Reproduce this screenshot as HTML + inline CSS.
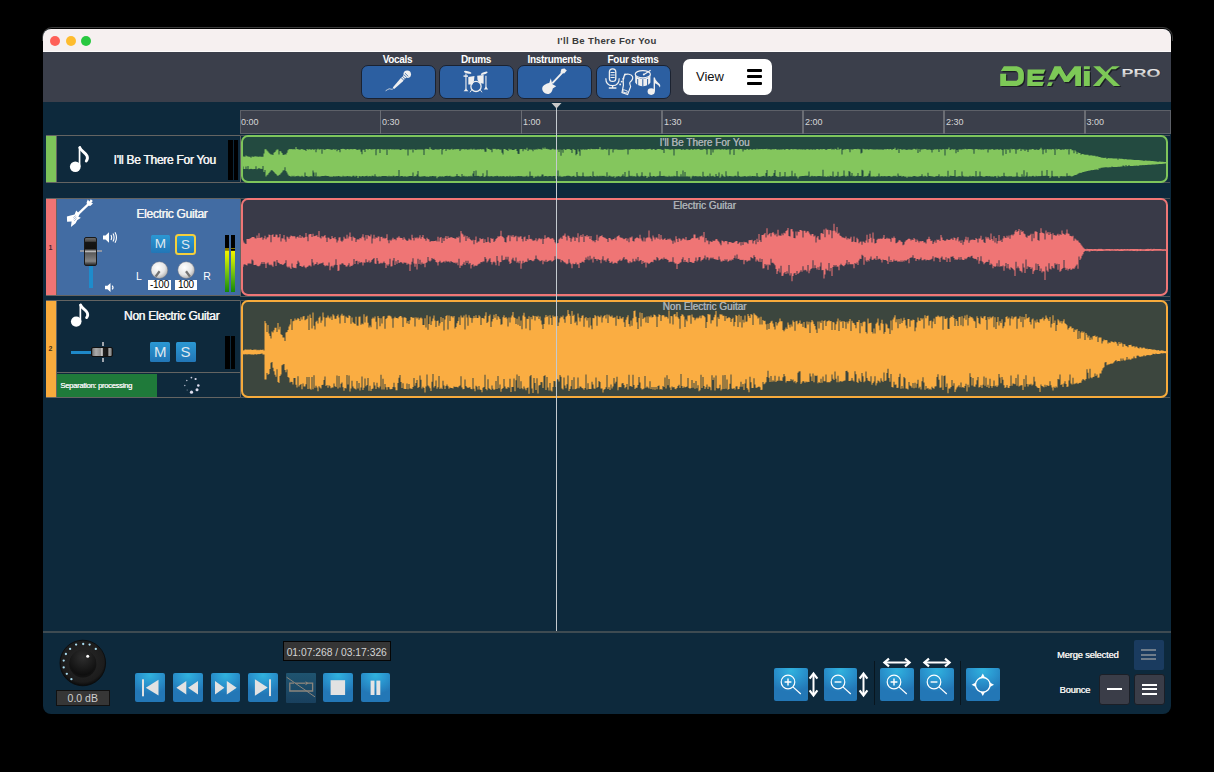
<!DOCTYPE html>
<html><head><meta charset="utf-8"><title>DeMIX Pro</title>
<style>
*{margin:0;padding:0;box-sizing:border-box}
html,body{width:1214px;height:772px;overflow:hidden;background:#000}
body{position:relative;font-family:"Liberation Sans",sans-serif}
.a{position:absolute}
#frame{position:absolute;left:41.6px;top:27.4px;width:1131.2px;height:14px;border-radius:10px 10px 0 0;border:1px solid #3a3a3a;border-bottom:none}
#win{position:absolute;left:43.4px;top:29px;width:1127.6px;height:685px;border-radius:8px;background:#0d293c}
#titlebar{position:absolute;left:43.4px;top:29px;width:1127.6px;height:22px;background:#f6f0f0;border-radius:8px 8px 0 0}
#tbline{position:absolute;left:43.4px;top:51px;width:1127.6px;height:1px;background:#fdfbfb}
.tl{position:absolute;top:35.6px;width:10px;height:10px;border-radius:50%}
#title{position:absolute;left:43px;width:1128px;top:35.2px;text-align:center;font-size:9.6px;font-weight:bold;color:#3a3a3a;letter-spacing:0.35px}
#toolbar{position:absolute;left:43.4px;top:52px;width:1127.6px;height:50px;background:#3b3f4b}
.stl{position:absolute;top:53.5px;width:75px;text-align:center;font-size:10px;font-weight:bold;color:#fff;letter-spacing:-0.3px;white-space:nowrap}
.stb{position:absolute;top:65px;width:75px;height:34px;background:#2c5fa1;border:1.5px solid #1b2230;border-radius:7px}
.stb svg{position:absolute;left:0;top:0}
#view{position:absolute;left:683px;top:59px;width:89px;height:35.5px;background:#fff;border-radius:7px}
#view span{position:absolute;left:13px;top:10px;font-size:13px;color:#111}
.hb{position:absolute;left:64px;width:15px;height:3.3px;background:#000;border-radius:1px}
#ruler{position:absolute;left:239.5px;top:110px;width:931.5px;height:24px;background:#3b3f4b;border:1px solid #5d6068}
.tick{position:absolute;top:110px;width:1.5px;height:23.5px;background:#6a6d74}
.tlab{position:absolute;top:116.6px;font-size:9px;color:#d6d6d6}
.hdr{position:absolute;left:45.5px;width:195px;border:1px solid #646462;border-left:none;background:#0e293c}
.strip{position:absolute;left:0;top:0;width:11.2px;height:100%;border-right:1px solid #646462}
.clip{position:absolute;border-radius:7px}
.ctitle{position:absolute;left:0;width:100%;text-align:center;font-size:10px;font-weight:normal;color:#aab0b5;white-space:nowrap;text-shadow:0.35px 0 0 #aab0b5}
.tname{position:absolute;font-size:12px;font-weight:normal;color:#f2f2f2;white-space:nowrap;letter-spacing:-0.28px;text-shadow:0.45px 0 0 #f2f2f2}
.mbtn{position:absolute;border-radius:1.5px;background:linear-gradient(#2b98d3,#2276b6);color:#dfe8f0;text-align:center}
.meter{position:absolute;width:4.5px;background:#000}
.tbtn{position:absolute;top:673px;width:29.6px;height:29.2px;border-radius:2px;background:radial-gradient(ellipse 75% 65% at 50% 8%,#30b2dd 0%,#2a97d0 45%,#2377b6 100%)}
.tbtn svg,.zbtn svg{position:absolute;left:0;top:0}
.zbtn{position:absolute;top:668px;width:33.5px;height:33px;border-radius:2px;background:radial-gradient(ellipse 75% 65% at 50% 8%,#30b2dd 0%,#2a97d0 45%,#2377b6 100%)}
.rl{position:absolute;left:240px;width:930px;height:1px;background:#4e5356}

</style></head>
<body>
<div id="frame"></div>
<div id="win"></div>
<div id="titlebar"></div>
<div id="tbline"></div>
<div class="tl" style="left:49.7px;background:#fe5f57"></div>
<div class="tl" style="left:65.6px;background:#febc2e"></div>
<div class="tl" style="left:81px;background:#28c840"></div>
<div id="title">I'll Be There For You</div>
<div id="toolbar"></div>

<div class="stl" style="left:360px">Vocals</div>
<div class="stl" style="left:438.5px">Drums</div>
<div class="stl" style="left:517px">Instruments</div>
<div class="stl" style="left:595.5px">Four stems</div>
<div class="stb" style="left:360.5px"></div>
<div class="stb" style="left:438.5px"></div>
<div class="stb" style="left:517px"></div>
<div class="stb" style="left:595.5px"></div>

<svg class="a" style="left:0;top:0" width="700" height="100" viewBox="0 0 700 100">
 <g fill="#f0f0f0" stroke="none">
  <!-- mic -->
  <circle cx="407.2" cy="74.2" r="3.8"/>
  <path d="M400.4,78.6 L403,81.2 L394.2,89 L392.8,87.6Z"/>
  <path d="M405.2,76.2 L401.2,80.2" stroke="#f0f0f0" stroke-width="3.4"/>
  <path d="M401.1,77.6 L403.9,80.4 M402.6,76.3 L405.4,79.1" stroke="#2c5fa1" stroke-width="0.85"/>
  <path d="M403.6,74.4 L406.9,77.7 M404.9,73.1 L408.3,76.4" stroke="#2c5fa1" stroke-width="0.8"/>
  <path d="M393.5,88.5 C391.5,90.2 390.5,88.6 389.2,88.8 C387.8,89 387.2,90.2 385.6,90.8" stroke="#e8e8e8" stroke-width="0.8" fill="none"/>
  <!-- drums -->
  <ellipse cx="467.7" cy="72.3" rx="3.8" ry="1.2" transform="rotate(14 467.7 72.3)"/>
  <ellipse cx="484.2" cy="73.2" rx="3.6" ry="1.1" transform="rotate(-20 484.2 73.2)"/>
  <rect x="465.4" y="73.5" width="1.1" height="16"/>
  <rect x="485.4" y="75.8" width="1.1" height="13"/>
  <path d="M463.5,75.4 L468,75.4 L468,76.8 L463.5,76.8Z"/>
  <path d="M463.6,91.3 L466,88.5 L468.4,91.3Z M483.8,89.5 L486,86.5 L488.2,89.5Z"/>
  <path d="M468.3,77 L474.5,76 L474,80.5 L472.6,84.5 L468.3,84.5Z"/>
  <path d="M477.2,75.8 L483.6,75 L483.6,83.8 L479.5,83 L477.5,80Z"/>
  <circle cx="476" cy="86.4" r="5.1" fill="none" stroke="#f0f0f0" stroke-width="1.3"/>
  <path d="M470,92.3 L472.2,89.2 M482,92.3 L479.8,89.2" stroke="#f0f0f0" stroke-width="0.9"/>
  <!-- guitar -->
  <path d="M560.4,72.6 L561.5,69 L564.5,68.5 L566.8,70.6 L564.2,73.6Z"/>
  <path d="M562.8,72.2 L552.2,83.4" stroke="#f0f0f0" stroke-width="1.9"/>
  <path d="M550.8,78.3 L549.4,82.8 C546.2,83.8 542.4,85.2 542.2,88.6 C542.1,91.8 545.4,94.6 548.6,94 C551.2,93.5 552.4,91.2 552.8,88.6 L556.2,86.2 L553.4,84.8 L552.2,84Z"/>
  <!-- four stems -->
  <rect x="609.4" y="68.8" width="6.4" height="12.6" rx="3.2" fill="none" stroke="#f0f0f0" stroke-width="1.3"/>
  <path d="M610.5,72.5 H614.7 M610.5,75 H614.7 M610.5,77.5 H614.7" stroke="#f0f0f0" stroke-width="1"/>
  <path d="M605.8,78.2 C605.8,83 608.6,85.6 612.6,85.6 C616.6,85.6 619.2,83 619.2,78.2" fill="none" stroke="#f0f0f0" stroke-width="1.2"/>
  <path d="M612.6,85.6 V87.8 M608.8,88 H616.4" stroke="#f0f0f0" stroke-width="1.3"/>
  <path d="M624.6,74.8 C626.6,73.4 631.6,74 632.6,76.8 C633.2,78.8 631.4,81 629.9,82.4 C629.3,83.6 630.4,85.2 630.6,86.6 L627.6,94.6 L622,92.6 L623.4,85.2 C622.9,82 623.4,77.4 624.6,74.8Z" fill="none" stroke="#f0f0f0" stroke-width="1.2"/>
  <path d="M623.4,89.6 L627.4,91 L626.6,93.2 L622.8,91.8Z" fill="none" stroke="#f0f0f0" stroke-width="0.9"/>
  <circle cx="625" cy="74.5" r="0.95"/><circle cx="623.3" cy="78.8" r="0.95"/><circle cx="621.7" cy="81.6" r="0.95"/><circle cx="620.2" cy="84.4" r="0.95"/>
  <ellipse cx="642.8" cy="74.2" rx="7.6" ry="3.6" fill="none" stroke="#f0f0f0" stroke-width="1.2"/>
  <path d="M635.2,74.5 L635.2,82.6 C636.5,85.3 640,86.2 642.8,86.2 C645.6,86.2 649.1,85.3 650.4,82.6 L650.4,74.5 C649,77.5 646,78.6 642.8,78.6 C639.6,78.6 636.6,77.5 635.2,74.5Z"/>
  <path d="M637.7,79 V85.5 M642.8,79.2 V86.5 M647.6,79 V85.5" stroke="#2c5fa1" stroke-width="1"/>
  <path d="M644,74.5 L650.6,70.3" stroke="#f0f0f0" stroke-width="1.2"/>
  <circle cx="643.8" cy="74.6" r="1"/>
  <ellipse cx="651.2" cy="91.6" rx="3.6" ry="3.3"/>
  <path d="M653.6,91.6 V77.4 L654.9,77.4 C655.3,80.5 657.6,81.8 659.4,83.8 C660.6,85.2 660.4,86.6 659.8,87.6 C659.4,86 658,84.5 655,83.2 L655,91.6Z"/>
 </g>
</svg>
<div id="view"><span>View</span>
<div class="hb" style="top:10px"></div><div class="hb" style="top:16.2px"></div><div class="hb" style="top:22.5px"></div></div>

<!-- logo -->
<svg class="a" style="left:995px;top:60px" width="172" height="34" viewBox="0 0 172 34">
 <defs>
  <linearGradient id="pro" x1="0" y1="0" x2="0" y2="1"><stop offset="0" stop-color="#fafafa"/><stop offset="0.5" stop-color="#d8d8d8"/><stop offset="1" stop-color="#9a9a9a"/></linearGradient>
  <g id="demix">
   <path d="M8.9,6.3 L20.5,6.3 C25.5,6.3 28.9,9.5 28.9,14 L28.9,18.5 C28.9,23 25.5,25.9 20.5,25.9 L5.2,25.9 L5.2,13.7 L11.1,13.7 L11.1,20.8 L20,20.8 C22,20.8 23.2,19.8 23.2,18 L23.2,14.3 C23.2,12.5 22,11.1 20,11.1 L5.9,11.1 Z"/>
   <path d="M32.6,9.6 L50.4,9.6 L48.6,13.7 L37.6,13.7 L37.6,15.9 L49,15.9 L47.4,20 L37.6,20 L37.6,21.9 L49,21.9 L47.4,25.9 L32.2,25.9 Z"/>
   <path d="M53.6,22.2 L57.8,22.2 L56.2,25.9 L51.9,25.9Z"/>
   <path d="M53.4,19.8 L59.5,6.3 L65.6,6.3 L71.5,16.5 L79.6,6.3 L86,6.3 L86,25.9 L80.2,25.9 L80.2,14.2 L73.8,22 L69.2,22 L63.8,13.2 L59.3,19.8 Z"/>
   <path d="M88.9,6.3 L94.8,6.3 L94.8,9.3 L88.9,9.3Z M88.9,11.1 L94.8,11.1 L94.8,25.9 L88.9,25.9Z"/>
   <path d="M98.2,6.3 L104.9,6.3 L125.2,25.9 L118.5,25.9 Z"/>
   <path d="M124.8,6.3 L120.6,9.3 L116.3,9.3 L104.5,25.9 L97.8,25.9 L112.8,9.9 L117.2,6.3Z"/>
  </g>
 </defs>
 <use href="#demix" transform="translate(1.2,1.2)" fill="#16191e" opacity="0.85"/>
 <use href="#demix" fill="#7dc957"/>
 <text x="126.5" y="16.6" fill="#1a1d22" opacity="0.6" font-family="Liberation Sans" font-weight="bold" font-size="11.5" textLength="39" lengthAdjust="spacingAndGlyphs" transform="translate(0.8,0.8)">PRO</text>
 <text x="126.5" y="16.6" fill="url(#pro)" font-family="Liberation Sans" font-weight="bold" font-size="11.5" textLength="39" lengthAdjust="spacingAndGlyphs">PRO</text>
</svg>

<!-- ruler -->
<div id="ruler"></div>
<div class="tick" style="left:379.5px"></div>
<div class="tick" style="left:520.5px"></div>
<div class="tick" style="left:661.3px"></div>
<div class="tick" style="left:802px"></div>
<div class="tick" style="left:943px"></div>
<div class="tick" style="left:1084px"></div>
<div class="tlab" style="left:241px">0:00</div>
<div class="tlab" style="left:382px">0:30</div>
<div class="tlab" style="left:523px">1:00</div>
<div class="tlab" style="left:664px">1:30</div>
<div class="tlab" style="left:805px">2:00</div>
<div class="tlab" style="left:946px">2:30</div>
<div class="tlab" style="left:1086.5px">3:00</div>

<!-- track headers -->
<div class="hdr" style="top:135px;height:48px"><div class="strip" style="background:#7dc45a"></div></div>
<div class="hdr" style="top:198px;height:98px;background:#426ca3"><div class="strip" style="background:#ef7474"></div></div>
<div class="hdr" style="top:300px;height:97.5px"><div class="strip" style="background:#f8ab3d"></div></div>

<!-- row lines -->
<div class="rl" style="top:135px"></div><div class="rl" style="top:182.3px"></div>
<div class="rl" style="top:198px"></div><div class="rl" style="top:295.6px"></div>
<div class="rl" style="top:299.8px"></div><div class="rl" style="top:396.8px"></div>
<!-- clips -->
<div class="clip" style="left:241px;top:135px;width:927px;height:48px;background:#234a40;border:2px solid #7ec55b"></div>
<div class="clip" style="left:240.8px;top:198px;width:926.8px;height:98.4px;background:#393a48;border:2px solid #ef7676"></div>
<div class="clip" style="left:240.8px;top:299.5px;width:927.2px;height:98px;background:#3c463e;border:2px solid #f7ab3c"></div>

<svg class="a" style="left:0;top:0" width="1214" height="772">
 <path d="M242.5,156.6H243.5V156.5H244.5V156.7H245.5V155.6H246.5V156.3H247.5V156.5H248.5V156.7H249.5V156.7H250.5V157.7H251.5V156.4H252.5V156.7H253.5V156.7H254.5V156.3H255.5V156.6H256.5V156.5H257.5V156.7H258.5V156.7H259.5V156.4H260.5V156.8H261.5V156.7H262.5V156.7H263.5V153.5H264.5V149.3H265.5V149.2H266.5V150.5H267.5V151.6H268.5V152.7H269.5V153.8H270.5V154.4H271.5V154.4H272.5V155.1H273.5V152.7H274.5V152.0H275.5V150.4H276.5V149.5H277.5V149.5H278.5V154.4H279.5V151.0H280.5V151.5H281.5V152.9H282.5V154.7H283.5V155.0H284.5V154.3H285.5V154.4H286.5V152.7H287.5V150.2H288.5V149.3H289.5V149.0H290.5V149.2H291.5V149.1H292.5V149.4H293.5V149.1H294.5V149.4H295.5V147.0H296.5V148.9H297.5V149.3H298.5V149.6H299.5V149.8H300.5V149.2H301.5V149.1H302.5V149.4H303.5V149.8H304.5V149.9H305.5V151.0H306.5V149.0H307.5V149.6H308.5V149.5H309.5V148.9H310.5V149.9H311.5V149.2H312.5V149.3H313.5V149.9H314.5V148.9H315.5V152.3H316.5V149.5H317.5V148.8H318.5V149.5H319.5V149.4H320.5V149.1H321.5V153.8H322.5V148.9H323.5V149.7H324.5V149.8H325.5V149.2H326.5V149.0H327.5V149.0H328.5V149.3H329.5V149.3H330.5V149.7H331.5V149.7H332.5V149.6H333.5V149.0H334.5V149.9H335.5V149.1H336.5V151.3H337.5V149.8H338.5V149.9H339.5V152.2H340.5V148.9H341.5V149.1H342.5V148.8H343.5V149.1H344.5V149.2H345.5V149.7H346.5V148.9H347.5V148.9H348.5V149.5H349.5V149.2H350.5V149.0H351.5V149.2H352.5V149.2H353.5V149.0H354.5V149.1H355.5V149.2H356.5V149.9H357.5V149.7H358.5V149.5H359.5V149.4H360.5V151.8H361.5V154.3H362.5V149.7H363.5V149.8H364.5V151.9H365.5V148.9H366.5V149.0H367.5V149.7H368.5V148.9H369.5V149.1H370.5V149.6H371.5V149.5H372.5V149.3H373.5V149.3H374.5V149.0H375.5V155.2H376.5V149.4H377.5V148.9H378.5V149.3H379.5V152.9H380.5V148.9H381.5V149.2H382.5V149.5H383.5V149.5H384.5V149.4H385.5V149.3H386.5V155.1H387.5V149.1H388.5V149.8H389.5V149.2H390.5V148.9H391.5V149.7H392.5V149.1H393.5V149.7H394.5V149.2H395.5V149.4H396.5V149.3H397.5V149.6H398.5V149.3H399.5V149.9H400.5V149.9H401.5V149.3H402.5V149.3H403.5V149.0H404.5V149.8H405.5V149.5H406.5V149.6H407.5V155.6H408.5V149.4H409.5V149.5H410.5V149.7H411.5V149.3H412.5V152.6H413.5V149.1H414.5V149.9H415.5V149.8H416.5V149.7H417.5V149.2H418.5V149.8H419.5V149.3H420.5V149.8H421.5V149.2H422.5V149.7H423.5V155.1H424.5V149.3H425.5V148.8H426.5V149.1H427.5V149.0H428.5V149.4H429.5V147.2H430.5V148.9H431.5V149.6H432.5V149.9H433.5V149.8H434.5V149.6H435.5V149.0H436.5V149.7H437.5V149.3H438.5V149.7H439.5V149.1H440.5V149.0H441.5V154.6H442.5V149.8H443.5V149.0H444.5V149.0H445.5V151.1H446.5V149.3H447.5V149.3H448.5V149.4H449.5V149.7H450.5V149.2H451.5V148.8H452.5V149.9H453.5V149.1H454.5V149.6H455.5V149.1H456.5V149.3H457.5V148.9H458.5V149.3H459.5V151.0H460.5V149.5H461.5V149.3H462.5V148.9H463.5V149.3H464.5V149.4H465.5V148.9H466.5V149.6H467.5V149.8H468.5V149.3H469.5V149.6H470.5V148.8H471.5V149.5H472.5V149.6H473.5V148.8H474.5V149.7H475.5V149.5H476.5V149.7H477.5V149.1H478.5V149.7H479.5V149.0H480.5V149.2H481.5V149.4H482.5V149.1H483.5V149.5H484.5V151.8H485.5V151.8H486.5V147.8H487.5V149.1H488.5V149.0H489.5V149.8H490.5V149.7H491.5V152.2H492.5V148.8H493.5V149.1H494.5V148.8H495.5V149.2H496.5V149.5H497.5V149.0H498.5V149.2H499.5V149.8H500.5V149.5H501.5V152.8H502.5V154.5H503.5V149.1H504.5V149.0H505.5V149.7H506.5V149.9H507.5V151.1H508.5V148.8H509.5V149.8H510.5V149.0H511.5V149.9H512.5V149.9H513.5V149.9H514.5V149.2H515.5V149.0H516.5V151.0H517.5V153.8H518.5V154.1H519.5V149.3H520.5V149.0H521.5V149.0H522.5V151.3H523.5V149.2H524.5V149.2H525.5V149.8H526.5V147.7H527.5V151.0H528.5V149.6H529.5V149.6H530.5V149.6H531.5V149.7H532.5V151.3H533.5V149.2H534.5V149.9H535.5V148.9H536.5V149.7H537.5V148.8H538.5V149.3H539.5V149.0H540.5V149.5H541.5V149.5H542.5V147.8H543.5V149.0H544.5V147.6H545.5V149.1H546.5V148.8H547.5V149.3H548.5V149.2H549.5V149.8H550.5V149.8H551.5V149.2H552.5V148.8H553.5V149.4H554.5V149.4H555.5V149.6H556.5V149.7H557.5V149.5H558.5V152.1H559.5V149.6H560.5V155.8H561.5V149.8H562.5V152.8H563.5V149.1H564.5V149.7H565.5V149.9H566.5V149.0H567.5V149.2H568.5V148.9H569.5V149.4H570.5V149.9H571.5V153.0H572.5V149.0H573.5V149.6H574.5V149.9H575.5V155.3H576.5V154.0H577.5V149.2H578.5V151.5H579.5V155.7H580.5V149.3H581.5V149.9H582.5V149.1H583.5V149.7H584.5V149.4H585.5V149.4H586.5V149.8H587.5V148.9H588.5V149.0H589.5V149.4H590.5V148.8H591.5V149.0H592.5V149.3H593.5V149.1H594.5V149.3H595.5V149.0H596.5V149.1H597.5V149.3H598.5V149.0H599.5V146.9H600.5V149.6H601.5V149.5H602.5V149.7H603.5V149.2H604.5V148.9H605.5V149.5H606.5V149.7H607.5V148.8H608.5V155.2H609.5V149.3H610.5V149.3H611.5V148.9H612.5V152.5H613.5V149.6H614.5V149.5H615.5V149.3H616.5V149.4H617.5V149.8H618.5V149.7H619.5V149.7H620.5V149.7H621.5V149.7H622.5V149.8H623.5V149.6H624.5V149.5H625.5V149.0H626.5V149.5H627.5V154.5H628.5V149.6H629.5V149.8H630.5V149.0H631.5V149.0H632.5V149.2H633.5V148.9H634.5V149.3H635.5V149.4H636.5V149.0H637.5V149.6H638.5V149.1H639.5V149.1H640.5V149.5H641.5V148.9H642.5V149.1H643.5V149.2H644.5V149.8H645.5V149.3H646.5V149.2H647.5V149.0H648.5V148.9H649.5V148.8H650.5V149.2H651.5V149.9H652.5V149.1H653.5V148.9H654.5V149.8H655.5V149.9H656.5V149.2H657.5V148.9H658.5V149.0H659.5V149.3H660.5V149.3H661.5V149.9H662.5V149.7H663.5V153.1H664.5V148.8H665.5V148.9H666.5V149.2H667.5V149.1H668.5V149.6H669.5V149.6H670.5V149.7H671.5V148.9H672.5V149.4H673.5V155.4H674.5V149.2H675.5V148.9H676.5V149.4H677.5V149.0H678.5V149.2H679.5V148.9H680.5V149.6H681.5V149.9H682.5V149.1H683.5V149.8H684.5V149.8H685.5V149.6H686.5V148.9H687.5V149.6H688.5V149.6H689.5V149.9H690.5V149.0H691.5V149.2H692.5V149.9H693.5V149.1H694.5V149.2H695.5V149.5H696.5V149.3H697.5V148.9H698.5V149.0H699.5V149.7H700.5V149.7H701.5V149.7H702.5V149.6H703.5V148.9H704.5V149.1H705.5V149.8H706.5V154.6H707.5V149.3H708.5V148.9H709.5V149.5H710.5V155.1H711.5V149.5H712.5V152.6H713.5V149.6H714.5V149.4H715.5V149.3H716.5V149.4H717.5V149.2H718.5V149.2H719.5V149.6H720.5V149.8H721.5V149.1H722.5V149.5H723.5V149.4H724.5V149.0H725.5V149.9H726.5V149.6H727.5V149.4H728.5V149.2H729.5V154.6H730.5V149.7H731.5V149.6H732.5V149.0H733.5V154.9H734.5V149.1H735.5V148.9H736.5V148.9H737.5V149.3H738.5V149.6H739.5V149.0H740.5V148.9H741.5V149.3H742.5V151.6H743.5V149.5H744.5V149.8H745.5V149.8H746.5V149.1H747.5V149.3H748.5V149.9H749.5V149.0H750.5V149.2H751.5V149.8H752.5V149.6H753.5V149.0H754.5V149.6H755.5V149.6H756.5V148.8H757.5V149.4H758.5V149.1H759.5V149.2H760.5V149.1H761.5V149.1H762.5V149.3H763.5V148.9H764.5V148.9H765.5V149.0H766.5V148.8H767.5V149.6H768.5V148.9H769.5V149.5H770.5V149.6H771.5V149.6H772.5V149.0H773.5V149.4H774.5V149.1H775.5V148.9H776.5V149.7H777.5V149.5H778.5V149.4H779.5V149.8H780.5V149.3H781.5V149.8H782.5V149.1H783.5V149.4H784.5V149.7H785.5V148.9H786.5V149.0H787.5V148.9H788.5V149.7H789.5V149.5H790.5V148.9H791.5V148.9H792.5V149.5H793.5V149.0H794.5V149.2H795.5V149.0H796.5V149.6H797.5V149.5H798.5V149.2H799.5V149.2H800.5V149.4H801.5V149.3H802.5V149.7H803.5V149.0H804.5V149.9H805.5V149.2H806.5V149.3H807.5V148.9H808.5V149.7H809.5V149.4H810.5V149.3H811.5V149.4H812.5V149.7H813.5V149.1H814.5V149.9H815.5V149.3H816.5V149.1H817.5V148.9H818.5V149.8H819.5V149.2H820.5V149.0H821.5V149.5H822.5V149.1H823.5V149.1H824.5V149.2H825.5V149.9H826.5V149.5H827.5V149.0H828.5V149.1H829.5V149.0H830.5V148.8H831.5V149.8H832.5V149.0H833.5V149.7H834.5V148.8H835.5V149.1H836.5V149.9H837.5V147.4H838.5V149.7H839.5V149.0H840.5V148.8H841.5V154.6H842.5V149.9H843.5V149.3H844.5V149.5H845.5V149.2H846.5V149.1H847.5V148.9H848.5V149.4H849.5V152.2H850.5V149.2H851.5V149.4H852.5V149.5H853.5V149.1H854.5V148.9H855.5V149.0H856.5V149.2H857.5V148.8H858.5V149.3H859.5V149.3H860.5V153.6H861.5V152.7H862.5V148.8H863.5V149.3H864.5V149.3H865.5V149.4H866.5V149.0H867.5V149.4H868.5V149.8H869.5V149.0H870.5V149.3H871.5V149.2H872.5V149.5H873.5V149.5H874.5V149.5H875.5V149.4H876.5V149.3H877.5V149.5H878.5V149.5H879.5V149.6H880.5V149.5H881.5V149.5H882.5V149.7H883.5V149.4H884.5V148.9H885.5V149.6H886.5V148.9H887.5V149.1H888.5V149.4H889.5V149.1H890.5V149.1H891.5V149.9H892.5V148.9H893.5V149.1H894.5V147.7H895.5V149.8H896.5V149.9H897.5V148.8H898.5V152.9H899.5V149.0H900.5V149.3H901.5V149.8H902.5V149.4H903.5V149.2H904.5V149.5H905.5V149.8H906.5V149.9H907.5V149.6H908.5V149.6H909.5V149.4H910.5V149.8H911.5V149.7H912.5V149.3H913.5V148.8H914.5V148.9H915.5V149.7H916.5V148.8H917.5V152.9H918.5V149.1H919.5V151.8H920.5V149.4H921.5V149.5H922.5V149.2H923.5V149.3H924.5V149.1H925.5V149.3H926.5V149.8H927.5V149.8H928.5V149.4H929.5V149.5H930.5V149.9H931.5V152.4H932.5V149.7H933.5V149.7H934.5V149.1H935.5V149.8H936.5V148.9H937.5V149.5H938.5V152.1H939.5V149.0H940.5V149.8H941.5V149.6H942.5V149.0H943.5V149.2H944.5V155.4H945.5V148.9H946.5V149.4H947.5V149.1H948.5V147.4H949.5V149.9H950.5V149.8H951.5V149.0H952.5V149.5H953.5V149.6H954.5V149.3H955.5V153.3H956.5V149.9H957.5V151.9H958.5V149.6H959.5V149.6H960.5V149.5H961.5V149.7H962.5V149.0H963.5V149.5H964.5V148.8H965.5V148.9H966.5V149.4H967.5V148.9H968.5V148.9H969.5V149.0H970.5V149.1H971.5V149.2H972.5V149.5H973.5V153.8H974.5V149.3H975.5V149.1H976.5V149.0H977.5V149.4H978.5V149.4H979.5V149.2H980.5V149.8H981.5V149.4H982.5V149.6H983.5V149.7H984.5V148.9H985.5V149.5H986.5V149.1H987.5V152.4H988.5V149.5H989.5V149.6H990.5V149.4H991.5V148.9H992.5V149.3H993.5V149.9H994.5V149.4H995.5V149.6H996.5V149.3H997.5V149.3H998.5V149.9H999.5V149.3H1000.5V149.3H1001.5V149.9H1002.5V155.4H1003.5V149.5H1004.5V149.2H1005.5V153.9H1006.5V149.1H1007.5V149.9H1008.5V149.2H1009.5V152.7H1010.5V148.8H1011.5V149.5H1012.5V149.0H1013.5V149.0H1014.5V149.4H1015.5V153.7H1016.5V149.4H1017.5V149.8H1018.5V149.1H1019.5V148.8H1020.5V151.0H1021.5V149.3H1022.5V149.5H1023.5V149.4H1024.5V150.9H1025.5V149.4H1026.5V149.7H1027.5V151.9H1028.5V149.7H1029.5V149.3H1030.5V149.7H1031.5V149.1H1032.5V148.9H1033.5V149.5H1034.5V149.9H1035.5V149.6H1036.5V149.6H1037.5V149.9H1038.5V149.7H1039.5V149.1H1040.5V147.8H1041.5V149.5H1042.5V154.2H1043.5V149.7H1044.5V149.2H1045.5V152.7H1046.5V149.2H1047.5V148.9H1048.5V149.8H1049.5V149.0H1050.5V149.7H1051.5V149.3H1052.5V149.0H1053.5V149.5H1054.5V155.1H1055.5V148.8H1056.5V149.7H1057.5V149.1H1058.5V149.1H1059.5V149.6H1060.5V149.9H1061.5V149.4H1062.5V149.6H1063.5V149.7H1064.5V149.3H1065.5V148.9H1066.5V149.7H1067.5V149.0H1068.5V154.5H1069.5V149.3H1070.5V149.0H1071.5V150.2H1072.5V150.3H1073.5V153.3H1074.5V150.3H1075.5V151.4H1076.5V153.9H1077.5V152.3H1078.5V153.1H1079.5V153.0H1080.5V154.8H1081.5V154.0H1082.5V153.9H1083.5V154.5H1084.5V154.8H1085.5V154.8H1086.5V154.7H1087.5V154.8H1088.5V155.4H1089.5V155.5H1090.5V155.3H1091.5V155.4H1092.5V155.8H1093.5V155.7H1094.5V155.8H1095.5V156.4H1096.5V156.3H1097.5V156.6H1098.5V157.1H1099.5V157.1H1100.5V157.4H1101.5V157.7H1102.5V157.7H1103.5V158.0H1104.5V157.8H1105.5V157.8H1106.5V159.0H1107.5V158.0H1108.5V158.2H1109.5V158.3H1110.5V158.2H1111.5V158.3H1112.5V158.5H1113.5V158.4H1114.5V158.5H1115.5V158.6H1116.5V158.4H1117.5V159.7H1118.5V158.6H1119.5V158.7H1120.5V158.7H1121.5V158.8H1122.5V159.0H1123.5V159.2H1124.5V159.3H1125.5V159.1H1126.5V159.4H1127.5V159.5H1128.5V159.4H1129.5V159.5H1130.5V159.4H1131.5V159.8H1132.5V159.7H1133.5V159.9H1134.5V159.9H1135.5V160.0H1136.5V159.9H1137.5V160.0H1138.5V160.1H1139.5V160.2H1140.5V160.3H1141.5V160.4H1142.5V160.4H1143.5V161.0H1144.5V160.5H1145.5V160.5H1146.5V160.7H1147.5V160.7H1148.5V160.7H1149.5V160.8H1150.5V161.0H1151.5V161.0H1152.5V161.1H1153.5V161.2H1154.5V161.2H1155.5V161.4H1156.5V161.4H1157.5V161.9H1158.5V161.6H1159.5V161.6H1160.5V161.7H1161.5V161.7H1162.5V161.8H1163.5V161.9H1164.5V162.1H1165.5V161.9H1166.5V162.0H1167.5V163.6H1166.5V163.5H1165.5V163.5H1164.5V163.7H1163.5V163.7H1162.5V163.9H1161.5V164.0H1160.5V164.0H1159.5V164.1H1158.5V164.2H1157.5V164.2H1156.5V164.3H1155.5V164.4H1154.5V164.4H1153.5V164.6H1152.5V164.6H1151.5V164.7H1150.5V164.8H1149.5V164.8H1148.5V164.8H1147.5V165.0H1146.5V165.1H1145.5V165.0H1144.5V165.2H1143.5V165.1H1142.5V165.2H1141.5V165.3H1140.5V165.3H1139.5V165.4H1138.5V165.9H1137.5V165.6H1136.5V165.7H1135.5V165.7H1134.5V165.8H1133.5V166.0H1132.5V165.9H1131.5V165.9H1130.5V166.0H1129.5V164.9H1128.5V166.0H1127.5V166.3H1126.5V165.0H1125.5V166.4H1124.5V165.7H1123.5V165.6H1122.5V166.5H1121.5V166.5H1120.5V166.8H1119.5V166.8H1118.5V166.8H1117.5V166.9H1116.5V167.0H1115.5V167.1H1114.5V167.0H1113.5V166.9H1112.5V166.6H1111.5V167.3H1110.5V167.3H1109.5V167.3H1108.5V167.5H1107.5V167.3H1106.5V167.3H1105.5V167.3H1104.5V167.4H1103.5V167.4H1102.5V167.7H1101.5V167.8H1100.5V168.4H1099.5V168.3H1098.5V169.9H1097.5V169.2H1096.5V169.7H1095.5V169.5H1094.5V169.9H1093.5V170.1H1092.5V170.2H1091.5V170.1H1090.5V170.8H1089.5V170.6H1088.5V171.1H1087.5V170.9H1086.5V171.5H1085.5V171.4H1084.5V172.1H1083.5V171.9H1082.5V172.4H1081.5V173.0H1080.5V172.8H1079.5V173.2H1078.5V173.8H1077.5V174.5H1076.5V174.9H1075.5V175.1H1074.5V175.6H1073.5V176.1H1072.5V176.4H1071.5V176.3H1070.5V175.7H1069.5V175.7H1068.5V176.1H1067.5V173.3H1066.5V176.2H1065.5V176.5H1064.5V175.9H1063.5V176.4H1062.5V175.9H1061.5V176.2H1060.5V176.2H1059.5V177.9H1058.5V176.6H1057.5V176.1H1056.5V176.6H1055.5V176.0H1054.5V176.8H1053.5V175.9H1052.5V170.7H1051.5V176.4H1050.5V178.0H1049.5V176.0H1048.5V176.1H1047.5V169.9H1046.5V175.7H1045.5V175.8H1044.5V175.9H1043.5V175.8H1042.5V170.7H1041.5V176.0H1040.5V176.3H1039.5V176.1H1038.5V176.2H1037.5V176.2H1036.5V175.7H1035.5V176.7H1034.5V176.3H1033.5V175.8H1032.5V176.0H1031.5V176.7H1030.5V175.9H1029.5V176.6H1028.5V176.5H1027.5V172.2H1026.5V175.8H1025.5V176.8H1024.5V170.3H1023.5V176.4H1022.5V174.3H1021.5V176.7H1020.5V176.8H1019.5V176.7H1018.5V176.2H1017.5V172.6H1016.5V176.3H1015.5V176.7H1014.5V176.4H1013.5V176.8H1012.5V176.5H1011.5V176.0H1010.5V176.5H1009.5V176.1H1008.5V176.8H1007.5V176.2H1006.5V176.5H1005.5V176.0H1004.5V172.7H1003.5V176.2H1002.5V176.1H1001.5V176.6H1000.5V176.8H999.5V176.5H998.5V175.7H997.5V177.8H996.5V176.2H995.5V175.9H994.5V176.5H993.5V176.7H992.5V176.2H991.5V176.7H990.5V175.9H989.5V176.2H988.5V176.2H987.5V175.9H986.5V176.1H985.5V176.6H984.5V176.8H983.5V176.6H982.5V176.2H981.5V176.1H980.5V171.6H979.5V176.3H978.5V176.3H977.5V176.5H976.5V171.1H975.5V176.6H974.5V176.3H973.5V175.9H972.5V176.2H971.5V176.6H970.5V175.7H969.5V176.6H968.5V176.8H967.5V176.4H966.5V176.4H965.5V176.4H964.5V176.5H963.5V175.8H962.5V171.4H961.5V176.6H960.5V176.0H959.5V176.3H958.5V176.2H957.5V176.7H956.5V176.4H955.5V170.1H954.5V176.0H953.5V176.1H952.5V176.0H951.5V175.8H950.5V175.7H949.5V176.7H948.5V170.8H947.5V176.5H946.5V176.5H945.5V176.1H944.5V176.7H943.5V176.2H942.5V176.2H941.5V176.3H940.5V176.4H939.5V174.3H938.5V176.1H937.5V176.3H936.5V175.9H935.5V176.7H934.5V176.7H933.5V176.6H932.5V176.3H931.5V176.3H930.5V176.0H929.5V175.9H928.5V172.7H927.5V176.7H926.5V176.2H925.5V175.7H924.5V176.6H923.5V176.2H922.5V174.3H921.5V176.1H920.5V176.2H919.5V176.3H918.5V176.7H917.5V176.4H916.5V176.6H915.5V176.1H914.5V176.1H913.5V176.3H912.5V176.7H911.5V176.7H910.5V176.6H909.5V176.7H908.5V176.4H907.5V177.8H906.5V176.5H905.5V176.7H904.5V176.3H903.5V175.9H902.5V176.7H901.5V175.7H900.5V176.1H899.5V175.7H898.5V173.4H897.5V176.7H896.5V175.8H895.5V176.2H894.5V175.8H893.5V176.2H892.5V176.6H891.5V176.7H890.5V176.1H889.5V176.1H888.5V175.9H887.5V176.5H886.5V176.3H885.5V176.2H884.5V175.9H883.5V176.5H882.5V176.1H881.5V176.2H880.5V176.5H879.5V173.5H878.5V176.2H877.5V176.2H876.5V176.4H875.5V176.7H874.5V176.2H873.5V176.5H872.5V176.6H871.5V176.4H870.5V170.7H869.5V173.4H868.5V175.7H867.5V176.0H866.5V176.5H865.5V176.1H864.5V176.7H863.5V170.4H862.5V169.8H861.5V175.9H860.5V176.0H859.5V175.9H858.5V173.0H857.5V175.8H856.5V176.1H855.5V176.5H854.5V175.8H853.5V176.2H852.5V172.9H851.5V175.8H850.5V171.8H849.5V171.0H848.5V176.2H847.5V175.7H846.5V176.7H845.5V175.8H844.5V170.4H843.5V175.8H842.5V176.1H841.5V176.3H840.5V176.4H839.5V176.4H838.5V171.8H837.5V175.9H836.5V175.8H835.5V176.7H834.5V176.4H833.5V171.6H832.5V176.3H831.5V176.0H830.5V175.7H829.5V176.8H828.5V176.1H827.5V176.8H826.5V176.8H825.5V176.3H824.5V176.5H823.5V169.8H822.5V176.3H821.5V176.2H820.5V176.1H819.5V175.9H818.5V176.0H817.5V176.3H816.5V176.4H815.5V175.9H814.5V176.2H813.5V176.3H812.5V175.8H811.5V176.2H810.5V176.7H809.5V171.4H808.5V175.8H807.5V175.8H806.5V175.8H805.5V175.8H804.5V176.0H803.5V175.9H802.5V175.9H801.5V176.3H800.5V176.2H799.5V176.7H798.5V178.4H797.5V176.4H796.5V176.2H795.5V173.2H794.5V176.2H793.5V176.3H792.5V170.8H791.5V176.2H790.5V176.1H789.5V176.5H788.5V176.5H787.5V176.5H786.5V176.4H785.5V171.9H784.5V176.2H783.5V176.2H782.5V176.3H781.5V176.7H780.5V172.1H779.5V176.8H778.5V176.7H777.5V176.5H776.5V175.9H775.5V169.9H774.5V173.1H773.5V175.7H772.5V175.9H771.5V176.7H770.5V176.0H769.5V176.1H768.5V176.4H767.5V169.9H766.5V173.1H765.5V176.5H764.5V175.7H763.5V176.0H762.5V176.3H761.5V176.4H760.5V176.7H759.5V176.8H758.5V176.2H757.5V173.1H756.5V176.5H755.5V175.9H754.5V176.3H753.5V176.1H752.5V176.0H751.5V176.6H750.5V175.8H749.5V176.5H748.5V175.9H747.5V176.7H746.5V176.6H745.5V176.1H744.5V176.2H743.5V176.4H742.5V176.4H741.5V176.7H740.5V176.6H739.5V176.0H738.5V171.5H737.5V176.4H736.5V175.8H735.5V175.7H734.5V176.3H733.5V176.6H732.5V176.3H731.5V176.2H730.5V176.0H729.5V176.0H728.5V176.6H727.5V175.7H726.5V171.2H725.5V176.7H724.5V176.6H723.5V175.8H722.5V174.2H721.5V176.4H720.5V177.8H719.5V172.6H718.5V176.2H717.5V176.0H716.5V173.9H715.5V176.7H714.5V176.5H713.5V175.8H712.5V176.3H711.5V176.3H710.5V173.4H709.5V176.6H708.5V175.7H707.5V176.0H706.5V176.7H705.5V176.2H704.5V176.2H703.5V171.8H702.5V176.7H701.5V176.5H700.5V175.9H699.5V176.6H698.5V176.2H697.5V176.6H696.5V176.1H695.5V176.2H694.5V176.3H693.5V175.8H692.5V176.4H691.5V178.6H690.5V176.6H689.5V176.4H688.5V176.5H687.5V176.2H686.5V176.4H685.5V171.9H684.5V176.5H683.5V170.5H682.5V176.5H681.5V174.2H680.5V176.6H679.5V176.4H678.5V176.3H677.5V171.0H676.5V176.3H675.5V176.3H674.5V175.8H673.5V176.6H672.5V176.3H671.5V176.5H670.5V176.4H669.5V175.8H668.5V176.7H667.5V176.6H666.5V176.4H665.5V176.2H664.5V175.7H663.5V175.9H662.5V176.1H661.5V175.9H660.5V171.2H659.5V175.7H658.5V176.2H657.5V176.0H656.5V176.7H655.5V176.4H654.5V175.9H653.5V175.9H652.5V176.7H651.5V175.9H650.5V172.5H649.5V176.8H648.5V176.6H647.5V177.9H646.5V176.1H645.5V175.7H644.5V176.5H643.5V176.0H642.5V172.2H641.5V175.7H640.5V176.5H639.5V176.4H638.5V175.8H637.5V173.3H636.5V176.6H635.5V176.5H634.5V176.0H633.5V176.4H632.5V175.8H631.5V176.3H630.5V175.7H629.5V170.8H628.5V176.6H627.5V176.8H626.5V176.7H625.5V171.9H624.5V176.3H623.5V174.2H622.5V175.8H621.5V176.4H620.5V176.7H619.5V176.1H618.5V176.3H617.5V176.4H616.5V176.4H615.5V177.7H614.5V175.9H613.5V176.7H612.5V176.5H611.5V176.4H610.5V175.7H609.5V175.7H608.5V176.7H607.5V172.3H606.5V176.5H605.5V176.3H604.5V175.7H603.5V175.9H602.5V175.7H601.5V176.2H600.5V175.8H599.5V176.3H598.5V176.3H597.5V175.8H596.5V176.6H595.5V176.2H594.5V175.9H593.5V171.5H592.5V176.7H591.5V175.9H590.5V176.1H589.5V176.4H588.5V176.2H587.5V176.5H586.5V176.2H585.5V176.7H584.5V175.9H583.5V172.4H582.5V175.9H581.5V176.4H580.5V176.0H579.5V176.3H578.5V175.8H577.5V172.0H576.5V176.8H575.5V176.7H574.5V175.7H573.5V176.0H572.5V176.5H571.5V176.5H570.5V175.9H569.5V175.8H568.5V175.7H567.5V175.7H566.5V176.1H565.5V176.6H564.5V176.0H563.5V176.8H562.5V176.4H561.5V176.7H560.5V175.8H559.5V176.4H558.5V170.5H557.5V176.1H556.5V178.7H555.5V176.0H554.5V175.9H553.5V176.0H552.5V176.4H551.5V176.1H550.5V176.1H549.5V176.0H548.5V176.5H547.5V176.2H546.5V176.1H545.5V176.1H544.5V176.5H543.5V174.6H542.5V174.6H541.5V176.3H540.5V176.5H539.5V176.5H538.5V175.8H537.5V176.4H536.5V176.4H535.5V176.6H534.5V178.0H533.5V176.2H532.5V175.8H531.5V176.1H530.5V171.4H529.5V176.2H528.5V176.7H527.5V175.8H526.5V176.3H525.5V176.5H524.5V176.4H523.5V176.6H522.5V176.3H521.5V176.0H520.5V176.3H519.5V175.9H518.5V175.9H517.5V176.2H516.5V176.2H515.5V176.3H514.5V176.7H513.5V176.1H512.5V176.4H511.5V176.5H510.5V175.7H509.5V176.4H508.5V176.5H507.5V176.1H506.5V176.5H505.5V176.8H504.5V176.0H503.5V176.3H502.5V176.3H501.5V176.5H500.5V176.0H499.5V176.8H498.5V175.9H497.5V175.8H496.5V176.3H495.5V176.0H494.5V176.6H493.5V176.5H492.5V176.2H491.5V175.9H490.5V176.4H489.5V176.3H488.5V176.2H487.5V170.2H486.5V175.8H485.5V176.8H484.5V176.7H483.5V173.3H482.5V176.1H481.5V176.3H480.5V176.4H479.5V176.1H478.5V175.8H477.5V175.9H476.5V170.5H475.5V175.9H474.5V171.0H473.5V173.5H472.5V176.4H471.5V175.7H470.5V176.6H469.5V176.1H468.5V176.5H467.5V176.4H466.5V176.3H465.5V176.6H464.5V175.8H463.5V176.2H462.5V174.1H461.5V176.8H460.5V176.4H459.5V175.9H458.5V175.9H457.5V174.0H456.5V176.0H455.5V176.5H454.5V176.5H453.5V176.8H452.5V176.4H451.5V176.5H450.5V175.7H449.5V176.0H448.5V176.2H447.5V175.8H446.5V176.1H445.5V176.0H444.5V176.8H443.5V176.5H442.5V176.3H441.5V176.8H440.5V175.9H439.5V176.7H438.5V176.7H437.5V178.2H436.5V176.3H435.5V176.3H434.5V176.2H433.5V175.9H432.5V176.0H431.5V176.5H430.5V176.1H429.5V176.7H428.5V176.8H427.5V176.6H426.5V176.7H425.5V176.0H424.5V176.2H423.5V176.3H422.5V176.4H421.5V176.6H420.5V176.7H419.5V176.3H418.5V171.0H417.5V174.6H416.5V176.2H415.5V176.0H414.5V176.6H413.5V172.5H412.5V175.9H411.5V176.1H410.5V176.0H409.5V176.1H408.5V176.5H407.5V176.6H406.5V176.7H405.5V175.9H404.5V176.8H403.5V176.3H402.5V176.0H401.5V175.9H400.5V176.6H399.5V170.0H398.5V176.0H397.5V176.0H396.5V176.0H395.5V176.5H394.5V175.8H393.5V175.8H392.5V176.6H391.5V175.9H390.5V176.6H389.5V175.8H388.5V176.5H387.5V176.2H386.5V176.0H385.5V176.1H384.5V176.0H383.5V176.1H382.5V176.0H381.5V176.5H380.5V176.4H379.5V176.2H378.5V176.8H377.5V176.5H376.5V176.3H375.5V174.3H374.5V176.3H373.5V175.8H372.5V175.7H371.5V176.5H370.5V176.0H369.5V176.3H368.5V176.5H367.5V175.7H366.5V176.1H365.5V176.2H364.5V176.4H363.5V176.1H362.5V175.9H361.5V176.7H360.5V176.0H359.5V176.3H358.5V177.9H357.5V175.9H356.5V175.7H355.5V176.7H354.5V175.7H353.5V175.8H352.5V176.6H351.5V176.8H350.5V176.0H349.5V176.4H348.5V176.1H347.5V176.0H346.5V176.5H345.5V176.2H344.5V176.5H343.5V175.8H342.5V176.7H341.5V176.4H340.5V176.5H339.5V175.9H338.5V176.0H337.5V176.5H336.5V175.9H335.5V176.7H334.5V176.0H333.5V176.4H332.5V176.8H331.5V176.4H330.5V176.8H329.5V176.3H328.5V176.1H327.5V175.9H326.5V175.8H325.5V175.8H324.5V176.1H323.5V176.0H322.5V176.1H321.5V176.2H320.5V176.6H319.5V176.5H318.5V176.3H317.5V176.6H316.5V172.6H315.5V176.2H314.5V172.6H313.5V170.6H312.5V176.6H311.5V175.9H310.5V176.6H309.5V176.5H308.5V176.7H307.5V176.1H306.5V175.9H305.5V172.5H304.5V176.7H303.5V176.4H302.5V175.8H301.5V176.6H300.5V176.4H299.5V176.2H298.5V175.7H297.5V176.3H296.5V176.0H295.5V176.7H294.5V175.8H293.5V176.4H292.5V175.8H291.5V176.7H290.5V175.9H289.5V175.7H288.5V174.6H287.5V172.4H286.5V171.1H285.5V167.3H284.5V170.2H283.5V170.6H282.5V172.3H281.5V173.2H280.5V174.5H279.5V175.0H278.5V175.9H277.5V175.2H276.5V173.9H275.5V173.2H274.5V172.1H273.5V170.9H272.5V170.1H271.5V170.4H270.5V171.8H269.5V173.1H268.5V174.4H267.5V175.2H266.5V176.6H265.5V169.9H264.5V172.0H263.5V166.1H262.5V169.1H261.5V168.8H260.5V168.8H259.5V168.1H258.5V168.8H257.5V169.3H256.5V166.3H255.5V169.1H254.5V169.0H253.5V169.2H252.5V168.9H251.5V168.8H250.5V168.9H249.5V169.2H248.5V166.1H247.5V169.1H246.5V166.5H245.5V169.1H244.5V169.0H243.5V166.5H242.5Z" fill="#84c65d"/>
 <path d="M242.5,240.6H243.5V242.4H244.5V243.6H245.5V244.1H246.5V239.0H247.5V239.1H248.5V239.1H249.5V238.6H250.5V238.0H251.5V237.1H252.5V237.1H253.5V237.0H254.5V238.2H255.5V238.6H256.5V235.5H257.5V237.9H258.5V233.3H259.5V238.0H260.5V237.6H261.5V237.3H262.5V239.8H263.5V238.2H264.5V235.8H265.5V239.3H266.5V237.6H267.5V237.2H268.5V234.5H269.5V235.0H270.5V242.3H271.5V235.1H272.5V234.3H273.5V237.1H274.5V236.7H275.5V234.5H276.5V234.8H277.5V237.4H278.5V237.3H279.5V234.0H280.5V241.6H281.5V238.2H282.5V238.4H283.5V234.9H284.5V239.6H285.5V241.7H286.5V236.5H287.5V237.2H288.5V238.7H289.5V236.7H290.5V235.5H291.5V236.1H292.5V236.6H293.5V236.1H294.5V236.4H295.5V238.4H296.5V236.9H297.5V236.6H298.5V237.8H299.5V234.9H300.5V238.0H301.5V236.2H302.5V237.3H303.5V238.1H304.5V236.9H305.5V233.1H306.5V236.7H307.5V241.2H308.5V234.5H309.5V234.0H310.5V233.9H311.5V237.0H312.5V233.8H313.5V236.3H314.5V236.1H315.5V235.5H316.5V235.3H317.5V237.1H318.5V231.0H319.5V237.6H320.5V238.5H321.5V235.9H322.5V237.2H323.5V236.1H324.5V235.0H325.5V237.7H326.5V242.1H327.5V237.5H328.5V237.7H329.5V239.2H330.5V239.0H331.5V235.9H332.5V238.1H333.5V238.6H334.5V237.1H335.5V239.2H336.5V242.6H337.5V240.6H338.5V237.5H339.5V237.3H340.5V240.8H341.5V241.8H342.5V240.5H343.5V236.7H344.5V238.6H345.5V238.7H346.5V234.8H347.5V238.4H348.5V236.6H349.5V232.6H350.5V237.0H351.5V240.8H352.5V236.6H353.5V237.5H354.5V238.1H355.5V241.9H356.5V239.5H357.5V239.2H358.5V239.5H359.5V238.0H360.5V238.5H361.5V236.8H362.5V234.2H363.5V237.5H364.5V240.6H365.5V235.1H366.5V238.7H367.5V235.0H368.5V236.0H369.5V236.5H370.5V234.6H371.5V243.5H372.5V238.4H373.5V234.7H374.5V238.8H375.5V237.3H376.5V238.1H377.5V236.6H378.5V236.6H379.5V241.3H380.5V237.1H381.5V236.7H382.5V238.5H383.5V237.7H384.5V238.8H385.5V238.0H386.5V234.3H387.5V240.2H388.5V243.2H389.5V239.7H390.5V240.7H391.5V239.6H392.5V237.8H393.5V239.6H394.5V239.0H395.5V240.2H396.5V237.7H397.5V237.4H398.5V236.3H399.5V237.7H400.5V238.1H401.5V238.0H402.5V239.8H403.5V237.3H404.5V238.7H405.5V240.0H406.5V240.9H407.5V240.6H408.5V238.4H409.5V239.5H410.5V240.3H411.5V234.8H412.5V238.0H413.5V240.4H414.5V237.5H415.5V238.3H416.5V237.3H417.5V238.5H418.5V237.6H419.5V235.2H420.5V238.8H421.5V237.1H422.5V235.0H423.5V238.2H424.5V239.0H425.5V240.8H426.5V237.7H427.5V239.0H428.5V239.5H429.5V241.8H430.5V241.2H431.5V241.1H432.5V241.2H433.5V241.1H434.5V240.9H435.5V240.4H436.5V241.5H437.5V236.7H438.5V241.6H439.5V237.8H440.5V237.0H441.5V243.1H442.5V238.3H443.5V241.0H444.5V237.8H445.5V236.1H446.5V239.0H447.5V236.3H448.5V238.1H449.5V237.5H450.5V237.3H451.5V237.2H452.5V237.9H453.5V238.1H454.5V238.7H455.5V238.4H456.5V236.9H457.5V238.0H458.5V236.6H459.5V242.6H460.5V230.9H461.5V233.6H462.5V234.6H463.5V236.7H464.5V235.5H465.5V241.1H466.5V236.1H467.5V238.4H468.5V237.3H469.5V239.0H470.5V239.9H471.5V240.8H472.5V239.7H473.5V244.3H474.5V240.0H475.5V236.6H476.5V242.7H477.5V241.6H478.5V241.5H479.5V238.0H480.5V239.2H481.5V239.1H482.5V238.5H483.5V243.0H484.5V239.2H485.5V242.3H486.5V242.1H487.5V237.3H488.5V241.8H489.5V243.0H490.5V238.0H491.5V238.9H492.5V238.5H493.5V242.0H494.5V240.7H495.5V239.0H496.5V237.9H497.5V236.2H498.5V236.8H499.5V235.9H500.5V230.7H501.5V236.3H502.5V237.0H503.5V238.2H504.5V241.9H505.5V242.6H506.5V237.3H507.5V235.6H508.5V235.2H509.5V241.3H510.5V235.6H511.5V236.7H512.5V234.9H513.5V237.2H514.5V236.5H515.5V235.8H516.5V241.3H517.5V236.6H518.5V237.4H519.5V236.6H520.5V236.3H521.5V238.9H522.5V241.4H523.5V237.2H524.5V236.5H525.5V240.9H526.5V238.9H527.5V239.5H528.5V235.1H529.5V238.9H530.5V238.7H531.5V239.5H532.5V240.8H533.5V240.5H534.5V240.3H535.5V238.3H536.5V241.3H537.5V239.5H538.5V238.2H539.5V238.6H540.5V239.3H541.5V238.6H542.5V244.0H543.5V239.1H544.5V235.3H545.5V238.6H546.5V237.8H547.5V237.0H548.5V237.4H549.5V238.4H550.5V239.0H551.5V238.1H552.5V238.6H553.5V239.7H554.5V242.3H555.5V243.5H556.5V243.4H557.5V242.9H558.5V239.6H559.5V238.6H560.5V237.6H561.5V239.0H562.5V235.8H563.5V235.4H564.5V233.6H565.5V236.7H566.5V240.6H567.5V235.6H568.5V236.3H569.5V238.0H570.5V241.7H571.5V238.4H572.5V236.8H573.5V237.6H574.5V241.1H575.5V237.3H576.5V238.0H577.5V233.3H578.5V242.3H579.5V236.6H580.5V234.9H581.5V237.1H582.5V234.3H583.5V242.1H584.5V235.9H585.5V236.6H586.5V235.1H587.5V236.8H588.5V235.9H589.5V238.9H590.5V236.0H591.5V240.1H592.5V241.2H593.5V240.6H594.5V242.3H595.5V240.1H596.5V234.7H597.5V240.8H598.5V237.4H599.5V236.3H600.5V236.0H601.5V235.2H602.5V237.0H603.5V237.5H604.5V237.8H605.5V238.4H606.5V239.0H607.5V242.1H608.5V238.1H609.5V237.9H610.5V239.2H611.5V240.2H612.5V239.1H613.5V238.9H614.5V237.8H615.5V240.2H616.5V236.7H617.5V236.1H618.5V235.2H619.5V237.3H620.5V237.7H621.5V237.8H622.5V238.4H623.5V239.2H624.5V238.8H625.5V237.9H626.5V240.7H627.5V238.4H628.5V242.2H629.5V237.5H630.5V237.4H631.5V236.5H632.5V240.9H633.5V241.6H634.5V238.8H635.5V237.9H636.5V237.3H637.5V237.9H638.5V238.6H639.5V234.8H640.5V238.4H641.5V240.5H642.5V241.5H643.5V237.6H644.5V241.6H645.5V238.2H646.5V237.4H647.5V237.6H648.5V230.5H649.5V237.5H650.5V238.8H651.5V241.2H652.5V235.5H653.5V237.6H654.5V239.5H655.5V237.5H656.5V237.6H657.5V238.7H658.5V234.1H659.5V239.4H660.5V234.9H661.5V238.7H662.5V240.0H663.5V238.9H664.5V238.3H665.5V239.9H666.5V239.8H667.5V238.8H668.5V239.6H669.5V238.5H670.5V239.7H671.5V240.7H672.5V243.8H673.5V240.4H674.5V242.5H675.5V236.2H676.5V239.1H677.5V241.9H678.5V238.3H679.5V238.8H680.5V240.8H681.5V239.4H682.5V238.2H683.5V238.8H684.5V239.8H685.5V236.9H686.5V240.3H687.5V240.2H688.5V240.1H689.5V240.1H690.5V239.1H691.5V238.0H692.5V238.3H693.5V234.5H694.5V234.5H695.5V238.2H696.5V238.2H697.5V237.5H698.5V239.7H699.5V236.6H700.5V236.3H701.5V235.5H702.5V237.2H703.5V232.0H704.5V242.3H705.5V238.1H706.5V240.5H707.5V240.6H708.5V244.3H709.5V241.3H710.5V241.5H711.5V241.9H712.5V240.5H713.5V241.1H714.5V240.4H715.5V238.9H716.5V239.3H717.5V240.7H718.5V241.8H719.5V243.4H720.5V245.2H721.5V240.4H722.5V241.1H723.5V242.2H724.5V241.1H725.5V241.1H726.5V241.3H727.5V244.3H728.5V241.9H729.5V242.1H730.5V242.2H731.5V242.7H732.5V243.0H733.5V242.6H734.5V241.7H735.5V240.9H736.5V241.0H737.5V243.9H738.5V242.7H739.5V242.0H740.5V245.5H741.5V242.0H742.5V245.0H743.5V241.7H744.5V242.4H745.5V242.0H746.5V242.7H747.5V243.8H748.5V240.2H749.5V239.9H750.5V240.3H751.5V239.7H752.5V243.4H753.5V240.9H754.5V240.0H755.5V244.3H756.5V238.7H757.5V242.0H758.5V234.0H759.5V240.2H760.5V241.9H761.5V234.9H762.5V235.0H763.5V234.3H764.5V233.1H765.5V237.6H766.5V228.2H767.5V235.2H768.5V233.9H769.5V232.9H770.5V236.5H771.5V232.9H772.5V232.0H773.5V233.6H774.5V235.2H775.5V233.8H776.5V236.4H777.5V229.7H778.5V235.4H779.5V235.4H780.5V235.7H781.5V233.5H782.5V235.3H783.5V232.7H784.5V233.6H785.5V231.0H786.5V230.2H787.5V228.1H788.5V236.1H789.5V236.6H790.5V229.2H791.5V228.9H792.5V231.4H793.5V238.0H794.5V238.2H795.5V231.6H796.5V235.5H797.5V231.5H798.5V232.0H799.5V230.1H800.5V230.0H801.5V230.8H802.5V237.6H803.5V230.7H804.5V230.7H805.5V232.8H806.5V231.4H807.5V230.9H808.5V232.5H809.5V234.3H810.5V235.4H811.5V234.0H812.5V234.0H813.5V236.5H814.5V235.6H815.5V242.6H816.5V237.6H817.5V235.9H818.5V239.4H819.5V239.8H820.5V233.3H821.5V233.0H822.5V234.0H823.5V229.5H824.5V237.3H825.5V228.4H826.5V229.7H827.5V229.8H828.5V234.5H829.5V230.0H830.5V230.6H831.5V238.2H832.5V230.7H833.5V223.8H834.5V230.8H835.5V232.5H836.5V226.9H837.5V233.8H838.5V232.8H839.5V235.6H840.5V235.9H841.5V237.3H842.5V237.6H843.5V237.7H844.5V238.2H845.5V236.6H846.5V239.6H847.5V237.9H848.5V239.2H849.5V238.5H850.5V236.8H851.5V241.9H852.5V241.5H853.5V236.5H854.5V242.0H855.5V242.3H856.5V237.7H857.5V239.2H858.5V243.3H859.5V241.8H860.5V241.6H861.5V244.8H862.5V241.6H863.5V241.8H864.5V242.9H865.5V240.4H866.5V234.7H867.5V242.4H868.5V238.9H869.5V233.7H870.5V237.8H871.5V242.6H872.5V232.6H873.5V238.7H874.5V243.6H875.5V243.0H876.5V239.8H877.5V238.8H878.5V238.8H879.5V238.7H880.5V238.4H881.5V239.1H882.5V237.8H883.5V235.1H884.5V239.1H885.5V238.7H886.5V237.7H887.5V238.8H888.5V238.2H889.5V239.0H890.5V241.8H891.5V237.8H892.5V238.3H893.5V236.4H894.5V238.0H895.5V243.3H896.5V242.7H897.5V241.7H898.5V240.3H899.5V240.2H900.5V241.5H901.5V241.9H902.5V245.3H903.5V244.5H904.5V241.7H905.5V240.5H906.5V239.9H907.5V239.0H908.5V238.5H909.5V238.9H910.5V240.6H911.5V239.5H912.5V240.1H913.5V238.0H914.5V239.2H915.5V242.1H916.5V239.4H917.5V240.7H918.5V242.4H919.5V240.9H920.5V241.5H921.5V240.9H922.5V241.1H923.5V242.6H924.5V242.2H925.5V243.5H926.5V239.6H927.5V239.0H928.5V236.8H929.5V239.0H930.5V240.9H931.5V240.6H932.5V244.0H933.5V242.2H934.5V240.6H935.5V242.8H936.5V239.5H937.5V240.0H938.5V239.4H939.5V241.0H940.5V235.1H941.5V237.5H942.5V239.9H943.5V240.2H944.5V241.1H945.5V240.2H946.5V239.1H947.5V239.7H948.5V239.9H949.5V239.7H950.5V238.8H951.5V238.4H952.5V240.1H953.5V237.5H954.5V238.1H955.5V240.6H956.5V238.6H957.5V237.1H958.5V241.5H959.5V240.5H960.5V243.0H961.5V240.2H962.5V244.8H963.5V241.7H964.5V239.5H965.5V236.7H966.5V240.2H967.5V237.2H968.5V242.8H969.5V240.4H970.5V239.7H971.5V239.8H972.5V239.4H973.5V240.1H974.5V240.1H975.5V238.1H976.5V239.0H977.5V242.4H978.5V238.4H979.5V238.6H980.5V235.8H981.5V239.9H982.5V239.2H983.5V242.3H984.5V243.1H985.5V236.8H986.5V238.6H987.5V237.0H988.5V238.5H989.5V240.1H990.5V233.6H991.5V239.1H992.5V240.8H993.5V236.2H994.5V242.6H995.5V237.9H996.5V243.5H997.5V241.0H998.5V234.9H999.5V241.1H1000.5V239.8H1001.5V242.1H1002.5V238.4H1003.5V236.1H1004.5V237.6H1005.5V237.9H1006.5V235.7H1007.5V237.4H1008.5V235.4H1009.5V238.7H1010.5V235.3H1011.5V234.4H1012.5V235.4H1013.5V234.3H1014.5V231.6H1015.5V229.9H1016.5V232.1H1017.5V230.9H1018.5V229.1H1019.5V235.0H1020.5V230.2H1021.5V231.9H1022.5V230.9H1023.5V233.6H1024.5V234.2H1025.5V236.8H1026.5V237.8H1027.5V235.4H1028.5V235.9H1029.5V235.0H1030.5V233.7H1031.5V241.2H1032.5V233.7H1033.5V238.3H1034.5V231.6H1035.5V231.2H1036.5V232.0H1037.5V240.1H1038.5V240.7H1039.5V232.9H1040.5V228.3H1041.5V232.6H1042.5V233.1H1043.5V233.6H1044.5V239.6H1045.5V230.5H1046.5V233.6H1047.5V231.9H1048.5V235.0H1049.5V232.2H1050.5V234.0H1051.5V239.5H1052.5V233.3H1053.5V235.3H1054.5V235.1H1055.5V236.0H1056.5V234.8H1057.5V233.7H1058.5V235.6H1059.5V234.1H1060.5V234.9H1061.5V230.6H1062.5V233.5H1063.5V234.1H1064.5V235.1H1065.5V233.4H1066.5V229.6H1067.5V233.5H1068.5V233.7H1069.5V235.7H1070.5V236.1H1071.5V236.6H1072.5V235.7H1073.5V240.7H1074.5V238.6H1075.5V239.5H1076.5V240.4H1077.5V240.6H1078.5V242.2H1079.5V243.1H1080.5V244.5H1081.5V245.8H1082.5V247.2H1083.5V248.3H1084.5V249.0H1085.5V249.2H1086.5V248.8H1087.5V249.1H1088.5V249.1H1089.5V249.0H1090.5V249.0H1091.5V249.0H1092.5V249.3H1093.5V249.0H1094.5V248.9H1095.5V248.9H1096.5V249.3H1097.5V248.9H1098.5V248.8H1099.5V249.1H1100.5V248.8H1101.5V249.1H1102.5V249.3H1103.5V249.3H1104.5V249.2H1105.5V249.1H1106.5V249.1H1107.5V249.1H1108.5V249.1H1109.5V249.0H1110.5V249.2H1111.5V249.1H1112.5V249.3H1113.5V249.3H1114.5V249.1H1115.5V249.2H1116.5V248.9H1117.5V249.1H1118.5V249.3H1119.5V249.2H1120.5V249.1H1121.5V249.1H1122.5V249.2H1123.5V249.1H1124.5V249.1H1125.5V249.2H1126.5V249.1H1127.5V249.1H1128.5V249.2H1129.5V248.9H1130.5V249.1H1131.5V249.1H1132.5V249.0H1133.5V249.0H1134.5V249.1H1135.5V249.1H1136.5V249.0H1137.5V249.0H1138.5V249.2H1139.5V249.1H1140.5V249.1H1141.5V249.3H1142.5V249.3H1143.5V249.3H1144.5V249.3H1145.5V249.1H1146.5V249.0H1147.5V248.7H1148.5V249.1H1149.5V249.0H1150.5V248.7H1151.5V249.2H1152.5V248.9H1153.5V248.7H1154.5V249.1H1155.5V249.1H1156.5V249.0H1157.5V249.1H1158.5V249.1H1159.5V248.9H1160.5V249.0H1161.5V249.3H1162.5V249.3H1163.5V249.3H1164.5V249.3H1165.5V249.3H1166.5V249.3H1167.5V250.7H1166.5V250.9H1165.5V250.8H1164.5V250.7H1163.5V250.9H1162.5V250.7H1161.5V250.7H1160.5V250.7H1159.5V250.7H1158.5V250.8H1157.5V250.8H1156.5V250.8H1155.5V250.8H1154.5V250.8H1153.5V250.9H1152.5V251.0H1151.5V250.7H1150.5V250.8H1149.5V251.0H1148.5V250.9H1147.5V251.0H1146.5V251.0H1145.5V251.0H1144.5V250.8H1143.5V251.1H1142.5V250.8H1141.5V251.0H1140.5V250.9H1139.5V250.7H1138.5V251.1H1137.5V251.2H1136.5V250.7H1135.5V251.0H1134.5V250.9H1133.5V250.9H1132.5V250.7H1131.5V250.7H1130.5V251.0H1129.5V250.7H1128.5V250.7H1127.5V250.7H1126.5V250.8H1125.5V250.7H1124.5V250.8H1123.5V251.0H1122.5V251.0H1121.5V251.0H1120.5V251.0H1119.5V251.0H1118.5V250.8H1117.5V250.7H1116.5V251.0H1115.5V250.8H1114.5V250.7H1113.5V250.8H1112.5V250.8H1111.5V250.8H1110.5V250.9H1109.5V250.8H1108.5V250.7H1107.5V250.8H1106.5V250.8H1105.5V250.7H1104.5V250.7H1103.5V251.0H1102.5V251.0H1101.5V251.1H1100.5V250.9H1099.5V250.9H1098.5V251.0H1097.5V251.2H1096.5V250.7H1095.5V251.0H1094.5V250.7H1093.5V250.9H1092.5V251.1H1091.5V250.8H1090.5V251.5H1089.5V251.4H1088.5V250.7H1087.5V251.3H1086.5V250.7H1085.5V251.0H1084.5V252.0H1083.5V254.3H1082.5V255.7H1081.5V258.6H1080.5V260.0H1079.5V256.4H1078.5V268.7H1077.5V264.6H1076.5V265.8H1075.5V267.6H1074.5V268.9H1073.5V268.3H1072.5V269.2H1071.5V270.1H1070.5V268.5H1069.5V269.1H1068.5V270.5H1067.5V268.5H1066.5V270.1H1065.5V267.7H1064.5V260.0H1063.5V267.9H1062.5V268.9H1061.5V270.7H1060.5V271.7H1059.5V264.0H1058.5V269.8H1057.5V263.8H1056.5V264.7H1055.5V263.3H1054.5V268.6H1053.5V267.7H1052.5V266.0H1051.5V269.5H1050.5V268.7H1049.5V263.3H1048.5V271.7H1047.5V270.4H1046.5V266.4H1045.5V279.9H1044.5V271.4H1043.5V271.3H1042.5V272.4H1041.5V268.4H1040.5V271.0H1039.5V266.0H1038.5V264.0H1037.5V270.1H1036.5V263.5H1035.5V269.9H1034.5V271.2H1033.5V273.9H1032.5V267.6H1031.5V269.1H1030.5V267.1H1029.5V267.3H1028.5V266.3H1027.5V269.1H1026.5V259.6H1025.5V273.1H1024.5V267.6H1023.5V263.5H1022.5V272.4H1021.5V271.3H1020.5V270.7H1019.5V268.2H1018.5V266.5H1017.5V268.3H1016.5V261.8H1015.5V276.1H1014.5V270.3H1013.5V269.0H1012.5V267.9H1011.5V267.2H1010.5V269.8H1009.5V268.4H1008.5V263.9H1007.5V268.2H1006.5V263.1H1005.5V266.3H1004.5V270.8H1003.5V265.6H1002.5V266.6H1001.5V266.1H1000.5V266.8H999.5V260.2H998.5V266.4H997.5V263.2H996.5V266.3H995.5V266.9H994.5V265.9H993.5V268.2H992.5V264.6H991.5V263.6H990.5V265.0H989.5V259.8H988.5V262.1H987.5V261.7H986.5V261.9H985.5V262.9H984.5V264.3H983.5V262.2H982.5V261.2H981.5V256.3H980.5V260.8H979.5V263.7H978.5V256.9H977.5V260.3H976.5V259.0H975.5V258.7H974.5V258.7H973.5V257.9H972.5V255.8H971.5V256.3H970.5V257.5H969.5V256.8H968.5V257.1H967.5V258.3H966.5V259.3H965.5V258.6H964.5V260.1H963.5V260.0H962.5V259.4H961.5V257.0H960.5V259.8H959.5V257.2H958.5V259.3H957.5V260.1H956.5V259.3H955.5V259.7H954.5V257.9H953.5V256.2H952.5V256.8H951.5V256.7H950.5V262.0H949.5V258.6H948.5V258.3H947.5V261.9H946.5V257.3H945.5V259.9H944.5V259.4H943.5V259.5H942.5V256.6H941.5V257.8H940.5V261.9H939.5V258.8H938.5V257.8H937.5V257.9H936.5V257.2H935.5V257.5H934.5V261.2H933.5V256.2H932.5V258.7H931.5V259.6H930.5V259.8H929.5V260.3H928.5V260.1H927.5V259.7H926.5V260.5H925.5V259.2H924.5V259.6H923.5V260.3H922.5V260.2H921.5V257.4H920.5V259.1H919.5V260.2H918.5V259.1H917.5V258.9H916.5V261.0H915.5V258.1H914.5V258.2H913.5V255.2H912.5V257.6H911.5V257.4H910.5V258.1H909.5V263.3H908.5V258.9H907.5V260.1H906.5V261.0H905.5V259.9H904.5V261.4H903.5V260.4H902.5V261.9H901.5V260.6H900.5V261.9H899.5V261.1H898.5V261.9H897.5V260.8H896.5V260.6H895.5V261.1H894.5V259.6H893.5V261.6H892.5V261.9H891.5V259.9H890.5V262.1H889.5V256.5H888.5V264.0H887.5V261.0H886.5V260.0H885.5V260.1H884.5V260.0H883.5V259.5H882.5V262.6H881.5V259.9H880.5V258.7H879.5V258.8H878.5V259.6H877.5V255.9H876.5V260.0H875.5V258.6H874.5V258.7H873.5V260.0H872.5V259.7H871.5V256.6H870.5V258.7H869.5V261.3H868.5V260.1H867.5V261.8H866.5V260.4H865.5V257.3H864.5V264.7H863.5V255.8H862.5V254.7H861.5V259.0H860.5V258.7H859.5V260.6H858.5V265.1H857.5V262.6H856.5V263.9H855.5V262.9H854.5V268.2H853.5V264.2H852.5V264.3H851.5V264.2H850.5V264.3H849.5V262.1H848.5V264.5H847.5V260.0H846.5V263.4H845.5V265.1H844.5V266.3H843.5V265.7H842.5V265.1H841.5V263.7H840.5V265.3H839.5V270.3H838.5V266.5H837.5V266.8H836.5V265.1H835.5V266.6H834.5V264.9H833.5V267.1H832.5V275.9H831.5V268.1H830.5V271.2H829.5V263.1H828.5V270.5H827.5V270.3H826.5V268.7H825.5V274.4H824.5V278.6H823.5V270.1H822.5V270.3H821.5V262.4H820.5V266.4H819.5V270.0H818.5V267.3H817.5V269.5H816.5V267.9H815.5V265.3H814.5V268.2H813.5V260.2H812.5V268.2H811.5V269.0H810.5V270.6H809.5V273.3H808.5V265.1H807.5V271.6H806.5V270.3H805.5V269.8H804.5V270.5H803.5V266.2H802.5V271.7H801.5V270.3H800.5V271.8H799.5V273.1H798.5V273.9H797.5V270.9H796.5V274.9H795.5V273.0H794.5V273.6H793.5V275.9H792.5V281.3H791.5V273.3H790.5V275.6H789.5V264.9H788.5V273.5H787.5V271.3H786.5V274.1H785.5V272.1H784.5V273.2H783.5V275.8H782.5V275.9H781.5V265.8H780.5V272.6H779.5V268.6H778.5V271.3H777.5V274.1H776.5V269.0H775.5V265.3H774.5V263.7H773.5V262.8H772.5V262.8H771.5V258.8H770.5V265.3H769.5V264.4H768.5V269.7H767.5V264.6H766.5V265.6H765.5V264.0H764.5V268.3H763.5V268.4H762.5V259.1H761.5V262.0H760.5V258.5H759.5V262.1H758.5V260.7H757.5V259.6H756.5V261.5H755.5V257.1H754.5V255.2H753.5V258.4H752.5V258.0H751.5V256.9H750.5V260.4H749.5V260.4H748.5V260.8H747.5V261.7H746.5V260.2H745.5V260.3H744.5V264.2H743.5V259.7H742.5V259.9H741.5V259.7H740.5V260.0H739.5V258.8H738.5V259.1H737.5V254.4H736.5V258.6H735.5V255.6H734.5V257.9H733.5V259.7H732.5V259.5H731.5V260.7H730.5V259.7H729.5V261.0H728.5V261.8H727.5V259.3H726.5V260.5H725.5V259.3H724.5V260.9H723.5V260.5H722.5V261.4H721.5V261.5H720.5V259.6H719.5V256.4H718.5V260.0H717.5V259.7H716.5V259.6H715.5V259.3H714.5V258.9H713.5V257.6H712.5V258.6H711.5V257.4H710.5V258.4H709.5V260.2H708.5V257.6H707.5V257.3H706.5V259.6H705.5V255.4H704.5V258.2H703.5V259.5H702.5V260.0H701.5V261.2H700.5V256.9H699.5V257.2H698.5V260.2H697.5V261.5H696.5V257.4H695.5V261.0H694.5V262.8H693.5V263.1H692.5V262.6H691.5V262.0H690.5V261.9H689.5V258.1H688.5V262.8H687.5V261.8H686.5V262.0H685.5V260.0H684.5V261.9H683.5V257.3H682.5V259.3H681.5V262.2H680.5V262.7H679.5V263.8H678.5V264.1H677.5V269.0H676.5V263.6H675.5V263.6H674.5V262.2H673.5V257.3H672.5V261.8H671.5V261.7H670.5V261.7H669.5V262.2H668.5V259.9H667.5V259.6H666.5V258.8H665.5V259.0H664.5V257.5H663.5V259.4H662.5V258.5H661.5V258.9H660.5V260.0H659.5V260.6H658.5V258.2H657.5V257.1H656.5V260.6H655.5V259.8H654.5V259.7H653.5V262.3H652.5V261.8H651.5V262.1H650.5V263.1H649.5V264.1H648.5V263.2H647.5V262.6H646.5V267.4H645.5V262.2H644.5V262.9H643.5V261.1H642.5V264.1H641.5V260.0H640.5V260.5H639.5V261.3H638.5V257.1H637.5V260.5H636.5V258.8H635.5V261.5H634.5V261.2H633.5V258.8H632.5V262.2H631.5V262.4H630.5V261.2H629.5V263.2H628.5V262.6H627.5V259.8H626.5V259.1H625.5V259.8H624.5V257.0H623.5V258.4H622.5V260.3H621.5V260.9H620.5V259.4H619.5V260.5H618.5V261.3H617.5V263.6H616.5V263.1H615.5V262.6H614.5V263.3H613.5V263.7H612.5V261.6H611.5V262.4H610.5V262.9H609.5V261.1H608.5V258.3H607.5V259.5H606.5V261.7H605.5V260.2H604.5V260.5H603.5V256.2H602.5V259.6H601.5V263.3H600.5V260.1H599.5V259.8H598.5V259.1H597.5V260.7H596.5V259.1H595.5V259.0H594.5V256.7H593.5V262.5H592.5V258.6H591.5V259.4H590.5V255.7H589.5V260.2H588.5V256.5H587.5V259.6H586.5V257.4H585.5V260.1H584.5V262.4H583.5V261.7H582.5V261.8H581.5V263.0H580.5V262.8H579.5V268.0H578.5V264.2H577.5V264.6H576.5V262.5H575.5V264.1H574.5V264.3H573.5V263.5H572.5V268.3H571.5V264.3H570.5V262.8H569.5V259.3H568.5V263.6H567.5V264.3H566.5V263.4H565.5V262.5H564.5V262.2H563.5V260.9H562.5V260.0H561.5V262.2H560.5V259.2H559.5V259.2H558.5V258.7H557.5V258.7H556.5V259.4H555.5V256.3H554.5V260.0H553.5V261.0H552.5V261.8H551.5V260.5H550.5V260.3H549.5V260.8H548.5V261.2H547.5V262.0H546.5V259.8H545.5V261.8H544.5V260.8H543.5V264.2H542.5V260.3H541.5V260.7H540.5V261.3H539.5V260.2H538.5V259.6H537.5V258.7H536.5V255.4H535.5V258.9H534.5V260.5H533.5V261.3H532.5V260.7H531.5V260.1H530.5V260.0H529.5V260.5H528.5V258.6H527.5V262.1H526.5V261.6H525.5V261.9H524.5V263.1H523.5V260.8H522.5V263.6H521.5V268.8H520.5V260.7H519.5V263.3H518.5V261.6H517.5V262.8H516.5V257.5H515.5V261.2H514.5V260.6H513.5V257.7H512.5V259.6H511.5V263.1H510.5V264.0H509.5V261.6H508.5V256.7H507.5V259.4H506.5V256.7H505.5V259.4H504.5V259.9H503.5V260.2H502.5V255.6H501.5V262.1H500.5V262.2H499.5V265.8H498.5V260.7H497.5V255.9H496.5V265.2H495.5V262.5H494.5V261.5H493.5V262.2H492.5V264.6H491.5V262.0H490.5V258.2H489.5V259.4H488.5V261.3H487.5V262.5H486.5V258.8H485.5V257.0H484.5V261.5H483.5V261.6H482.5V262.3H481.5V262.0H480.5V263.6H479.5V263.7H478.5V264.4H477.5V265.8H476.5V265.7H475.5V265.6H474.5V266.6H473.5V264.3H472.5V264.9H471.5V268.5H470.5V263.1H469.5V264.2H468.5V260.8H467.5V262.9H466.5V260.8H465.5V265.0H464.5V262.3H463.5V264.2H462.5V265.7H461.5V265.4H460.5V268.1H459.5V258.7H458.5V265.2H457.5V262.5H456.5V263.5H455.5V262.4H454.5V262.9H453.5V262.3H452.5V262.1H451.5V260.9H450.5V262.6H449.5V261.4H448.5V261.4H447.5V261.8H446.5V260.7H445.5V262.6H444.5V261.3H443.5V261.9H442.5V262.7H441.5V262.4H440.5V260.8H439.5V261.9H438.5V265.6H437.5V262.5H436.5V262.0H435.5V260.0H434.5V258.7H433.5V259.3H432.5V258.1H431.5V260.5H430.5V261.4H429.5V260.8H428.5V257.1H427.5V262.3H426.5V263.0H425.5V267.3H424.5V263.4H423.5V264.1H422.5V262.6H421.5V264.4H420.5V259.8H419.5V264.0H418.5V258.7H417.5V269.5H416.5V263.7H415.5V266.7H414.5V263.6H413.5V258.3H412.5V261.7H411.5V264.5H410.5V270.9H409.5V264.3H408.5V263.6H407.5V264.7H406.5V262.7H405.5V262.8H404.5V262.6H403.5V263.8H402.5V262.8H401.5V261.9H400.5V262.6H399.5V262.9H398.5V260.0H397.5V263.8H396.5V261.3H395.5V264.9H394.5V258.0H393.5V260.6H392.5V266.2H391.5V266.4H390.5V258.7H389.5V264.2H388.5V265.8H387.5V264.5H386.5V268.0H385.5V263.0H384.5V261.4H383.5V262.7H382.5V263.5H381.5V262.7H380.5V263.5H379.5V263.7H378.5V260.7H377.5V258.1H376.5V263.9H375.5V263.6H374.5V258.0H373.5V259.1H372.5V260.1H371.5V261.8H370.5V262.8H369.5V260.5H368.5V262.2H367.5V262.2H366.5V259.2H365.5V262.7H364.5V262.4H363.5V265.6H362.5V262.5H361.5V261.9H360.5V262.9H359.5V261.5H358.5V264.2H357.5V260.8H356.5V260.9H355.5V264.0H354.5V259.1H353.5V264.8H352.5V265.9H351.5V265.7H350.5V266.8H349.5V263.2H348.5V265.2H347.5V266.6H346.5V266.5H345.5V264.9H344.5V264.8H343.5V263.6H342.5V263.3H341.5V264.6H340.5V264.5H339.5V270.4H338.5V270.9H337.5V265.1H336.5V259.2H335.5V264.8H334.5V265.4H333.5V267.4H332.5V265.7H331.5V266.4H330.5V270.2H329.5V262.6H328.5V265.8H327.5V265.6H326.5V265.5H325.5V266.2H324.5V265.0H323.5V262.4H322.5V263.2H321.5V263.2H320.5V263.7H319.5V263.7H318.5V264.9H317.5V262.3H316.5V264.1H315.5V264.3H314.5V265.4H313.5V262.5H312.5V258.9H311.5V266.5H310.5V265.4H309.5V265.5H308.5V266.6H307.5V267.1H306.5V268.3H305.5V267.2H304.5V265.6H303.5V266.4H302.5V267.1H301.5V266.1H300.5V265.9H299.5V262.4H298.5V260.7H297.5V264.1H296.5V268.2H295.5V267.7H294.5V268.0H293.5V267.2H292.5V263.4H291.5V269.1H290.5V267.7H289.5V266.5H288.5V267.4H287.5V266.6H286.5V260.3H285.5V263.0H284.5V264.0H283.5V264.9H282.5V264.5H281.5V263.9H280.5V264.2H279.5V262.9H278.5V262.5H277.5V259.9H276.5V266.0H275.5V261.6H274.5V261.4H273.5V266.8H272.5V265.5H271.5V264.6H270.5V265.3H269.5V264.6H268.5V262.4H267.5V263.4H266.5V268.1H265.5V263.8H264.5V262.1H263.5V264.1H262.5V262.0H261.5V263.8H260.5V265.6H259.5V266.2H258.5V266.3H257.5V265.8H256.5V264.7H255.5V265.1H254.5V264.9H253.5V260.6H252.5V259.4H251.5V263.7H250.5V263.5H249.5V263.6H248.5V263.5H247.5V265.5H246.5V265.0H245.5V264.3H244.5V264.5H243.5V266.7H242.5Z" fill="#ef7575"/>
 <path d="M242.5,350.5H243.5V350.2H244.5V349.6H245.5V349.6H246.5V349.7H247.5V349.6H248.5V349.7H249.5V349.6H250.5V349.6H251.5V350.1H252.5V350.0H253.5V349.6H254.5V349.7H255.5V349.6H256.5V350.3H257.5V349.7H258.5V350.3H259.5V349.7H260.5V349.8H261.5V350.0H262.5V349.6H263.5V350.6H264.5V321.0H265.5V323.3H266.5V332.0H267.5V325.1H268.5V333.5H269.5V336.0H270.5V338.5H271.5V331.6H272.5V332.4H273.5V330.3H274.5V327.8H275.5V327.7H276.5V332.0H277.5V323.1H278.5V329.5H279.5V326.7H280.5V334.2H281.5V335.0H282.5V337.5H283.5V337.5H284.5V341.1H285.5V332.6H286.5V332.1H287.5V329.9H288.5V326.5H289.5V324.4H290.5V319.0H291.5V329.9H292.5V321.2H293.5V320.8H294.5V318.5H295.5V320.2H296.5V319.6H297.5V318.1H298.5V319.1H299.5V320.9H300.5V317.2H301.5V319.6H302.5V316.6H303.5V316.0H304.5V320.3H305.5V319.5H306.5V318.7H307.5V315.7H308.5V330.1H309.5V314.6H310.5V317.9H311.5V328.6H312.5V312.4H313.5V325.7H314.5V329.5H315.5V321.8H316.5V320.8H317.5V323.4H318.5V317.7H319.5V316.4H320.5V322.8H321.5V320.4H322.5V312.6H323.5V317.2H324.5V326.5H325.5V317.7H326.5V317.5H327.5V315.6H328.5V317.5H329.5V318.4H330.5V316.4H331.5V320.1H332.5V314.2H333.5V315.5H334.5V318.7H335.5V318.8H336.5V315.9H337.5V314.4H338.5V317.6H339.5V323.5H340.5V315.4H341.5V313.7H342.5V315.8H343.5V315.4H344.5V322.9H345.5V316.5H346.5V317.6H347.5V318.0H348.5V315.3H349.5V315.9H350.5V323.7H351.5V317.5H352.5V322.3H353.5V323.2H354.5V324.0H355.5V316.8H356.5V325.5H357.5V325.7H358.5V316.8H359.5V316.4H360.5V324.8H361.5V323.5H362.5V324.3H363.5V314.2H364.5V322.6H365.5V316.8H366.5V315.8H367.5V322.8H368.5V327.4H369.5V325.6H370.5V327.3H371.5V318.7H372.5V317.6H373.5V318.5H374.5V316.4H375.5V321.8H376.5V329.2H377.5V315.9H378.5V318.1H379.5V326.2H380.5V318.3H381.5V323.4H382.5V316.6H383.5V316.0H384.5V328.8H385.5V318.9H386.5V317.9H387.5V315.8H388.5V315.6H389.5V315.7H390.5V316.6H391.5V318.4H392.5V327.8H393.5V318.2H394.5V316.8H395.5V318.0H396.5V318.1H397.5V318.6H398.5V316.9H399.5V316.0H400.5V315.9H401.5V317.4H402.5V326.9H403.5V317.6H404.5V317.3H405.5V317.9H406.5V323.2H407.5V321.0H408.5V324.1H409.5V320.3H410.5V316.9H411.5V317.2H412.5V318.1H413.5V317.5H414.5V326.6H415.5V317.2H416.5V318.6H417.5V317.6H418.5V319.8H419.5V318.3H420.5V317.6H421.5V318.5H422.5V325.1H423.5V325.0H424.5V318.2H425.5V327.5H426.5V315.3H427.5V329.7H428.5V324.1H429.5V316.5H430.5V325.0H431.5V321.3H432.5V318.4H433.5V315.6H434.5V320.5H435.5V326.9H436.5V320.9H437.5V320.4H438.5V325.8H439.5V323.3H440.5V317.0H441.5V321.9H442.5V318.1H443.5V330.5H444.5V319.6H445.5V315.9H446.5V315.3H447.5V329.4H448.5V315.5H449.5V320.9H450.5V316.3H451.5V316.2H452.5V317.6H453.5V315.9H454.5V328.6H455.5V327.0H456.5V323.2H457.5V321.0H458.5V317.2H459.5V325.1H460.5V315.4H461.5V317.4H462.5V317.5H463.5V315.6H464.5V329.6H465.5V314.5H466.5V317.6H467.5V325.7H468.5V315.2H469.5V317.5H470.5V318.0H471.5V322.7H472.5V318.2H473.5V315.9H474.5V318.0H475.5V315.2H476.5V317.9H477.5V318.0H478.5V315.3H479.5V316.6H480.5V325.0H481.5V318.1H482.5V318.0H483.5V318.7H484.5V315.7H485.5V312.3H486.5V323.0H487.5V321.7H488.5V315.9H489.5V314.6H490.5V326.9H491.5V321.5H492.5V318.9H493.5V314.8H494.5V317.7H495.5V313.9H496.5V319.7H497.5V316.1H498.5V317.3H499.5V318.9H500.5V324.8H501.5V324.2H502.5V317.2H503.5V315.2H504.5V318.1H505.5V317.1H506.5V318.5H507.5V326.4H508.5V317.4H509.5V322.6H510.5V317.5H511.5V315.4H512.5V312.0H513.5V317.3H514.5V318.0H515.5V324.0H516.5V318.8H517.5V324.7H518.5V316.4H519.5V325.9H520.5V320.6H521.5V329.3H522.5V315.4H523.5V312.7H524.5V316.7H525.5V328.4H526.5V318.7H527.5V319.0H528.5V316.2H529.5V330.2H530.5V317.0H531.5V319.3H532.5V315.5H533.5V316.1H534.5V320.6H535.5V316.1H536.5V317.0H537.5V315.8H538.5V319.1H539.5V316.6H540.5V320.4H541.5V324.6H542.5V329.1H543.5V324.1H544.5V317.5H545.5V315.1H546.5V317.0H547.5V315.8H548.5V324.6H549.5V315.3H550.5V318.0H551.5V325.0H552.5V315.5H553.5V317.0H554.5V315.9H555.5V317.2H556.5V315.9H557.5V325.9H558.5V322.5H559.5V318.3H560.5V316.5H561.5V317.2H562.5V315.6H563.5V319.3H564.5V322.7H565.5V316.7H566.5V315.8H567.5V310.0H568.5V314.1H569.5V315.8H570.5V324.1H571.5V310.9H572.5V316.0H573.5V314.8H574.5V322.8H575.5V321.5H576.5V325.2H577.5V313.5H578.5V317.5H579.5V321.6H580.5V318.1H581.5V315.7H582.5V315.3H583.5V326.7H584.5V318.3H585.5V317.0H586.5V320.6H587.5V318.0H588.5V327.4H589.5V317.5H590.5V325.5H591.5V329.3H592.5V318.1H593.5V318.2H594.5V314.9H595.5V316.3H596.5V325.8H597.5V315.8H598.5V316.8H599.5V317.2H600.5V315.5H601.5V322.5H602.5V317.4H603.5V316.1H604.5V315.1H605.5V318.4H606.5V314.4H607.5V323.1H608.5V314.8H609.5V316.3H610.5V316.8H611.5V315.4H612.5V317.7H613.5V317.8H614.5V317.2H615.5V325.8H616.5V315.7H617.5V319.0H618.5V319.3H619.5V316.3H620.5V318.5H621.5V318.5H622.5V317.1H623.5V322.3H624.5V326.9H625.5V319.7H626.5V317.3H627.5V315.2H628.5V324.1H629.5V326.4H630.5V320.5H631.5V325.8H632.5V318.2H633.5V311.0H634.5V310.5H635.5V316.7H636.5V322.2H637.5V328.9H638.5V318.0H639.5V312.6H640.5V326.6H641.5V313.0H642.5V318.9H643.5V317.7H644.5V317.2H645.5V322.4H646.5V316.5H647.5V323.0H648.5V316.3H649.5V317.2H650.5V315.4H651.5V317.6H652.5V317.1H653.5V314.4H654.5V314.9H655.5V316.6H656.5V326.9H657.5V316.7H658.5V314.2H659.5V315.0H660.5V320.9H661.5V315.4H662.5V315.0H663.5V315.4H664.5V317.3H665.5V316.5H666.5V316.9H667.5V318.5H668.5V310.6H669.5V323.4H670.5V316.0H671.5V316.3H672.5V324.4H673.5V314.6H674.5V314.0H675.5V316.5H676.5V312.0H677.5V317.2H678.5V318.7H679.5V328.8H680.5V315.9H681.5V314.3H682.5V314.8H683.5V316.4H684.5V326.9H685.5V319.6H686.5V321.3H687.5V315.6H688.5V315.4H689.5V315.2H690.5V323.8H691.5V314.4H692.5V317.3H693.5V317.7H694.5V320.3H695.5V318.4H696.5V317.4H697.5V318.4H698.5V317.4H699.5V315.8H700.5V318.2H701.5V315.6H702.5V315.3H703.5V316.1H704.5V317.2H705.5V328.1H706.5V321.9H707.5V313.9H708.5V314.6H709.5V314.6H710.5V323.4H711.5V320.2H712.5V320.2H713.5V317.3H714.5V314.7H715.5V310.9H716.5V326.5H717.5V317.2H718.5V319.0H719.5V314.3H720.5V314.6H721.5V314.6H722.5V315.7H723.5V315.7H724.5V320.9H725.5V316.1H726.5V318.4H727.5V317.9H728.5V317.0H729.5V318.1H730.5V321.9H731.5V319.0H732.5V317.8H733.5V326.3H734.5V322.0H735.5V315.0H736.5V316.0H737.5V326.9H738.5V314.7H739.5V322.3H740.5V316.1H741.5V327.6H742.5V319.7H743.5V322.4H744.5V315.5H745.5V321.7H746.5V321.5H747.5V313.9H748.5V316.0H749.5V318.0H750.5V313.9H751.5V314.7H752.5V325.1H753.5V313.2H754.5V314.4H755.5V315.2H756.5V316.3H757.5V318.4H758.5V317.4H759.5V324.6H760.5V316.7H761.5V324.6H762.5V319.9H763.5V320.9H764.5V320.7H765.5V324.2H766.5V329.8H767.5V323.8H768.5V329.1H769.5V322.9H770.5V321.5H771.5V320.8H772.5V323.4H773.5V326.8H774.5V329.6H775.5V322.1H776.5V325.4H777.5V323.2H778.5V321.8H779.5V318.6H780.5V321.3H781.5V321.2H782.5V330.0H783.5V331.3H784.5V329.4H785.5V327.5H786.5V329.0H787.5V322.6H788.5V324.7H789.5V327.5H790.5V324.4H791.5V326.6H792.5V320.6H793.5V321.9H794.5V330.8H795.5V321.3H796.5V320.8H797.5V324.2H798.5V323.1H799.5V320.4H800.5V324.0H801.5V323.6H802.5V327.0H803.5V321.9H804.5V327.8H805.5V328.3H806.5V321.6H807.5V324.5H808.5V321.8H809.5V332.9H810.5V322.2H811.5V320.1H812.5V321.6H813.5V324.0H814.5V326.1H815.5V329.4H816.5V333.0H817.5V321.4H818.5V328.5H819.5V321.5H820.5V323.1H821.5V320.6H822.5V330.1H823.5V320.9H824.5V320.3H825.5V325.9H826.5V321.5H827.5V320.9H828.5V320.3H829.5V321.2H830.5V321.0H831.5V330.1H832.5V322.0H833.5V322.4H834.5V330.1H835.5V324.2H836.5V321.5H837.5V318.6H838.5V331.0H839.5V320.6H840.5V321.9H841.5V321.1H842.5V328.1H843.5V321.0H844.5V321.9H845.5V328.8H846.5V321.8H847.5V323.6H848.5V321.3H849.5V319.0H850.5V331.0H851.5V320.7H852.5V322.7H853.5V323.2H854.5V324.9H855.5V328.3H856.5V322.1H857.5V322.1H858.5V320.0H859.5V333.2H860.5V322.9H861.5V326.2H862.5V322.3H863.5V321.6H864.5V321.7H865.5V331.9H866.5V333.6H867.5V318.6H868.5V323.6H869.5V322.9H870.5V322.8H871.5V332.1H872.5V333.5H873.5V328.5H874.5V333.6H875.5V323.8H876.5V322.5H877.5V318.5H878.5V325.4H879.5V330.2H880.5V323.2H881.5V319.8H882.5V323.7H883.5V333.7H884.5V331.9H885.5V323.4H886.5V324.5H887.5V328.2H888.5V328.5H889.5V333.9H890.5V320.4H891.5V330.3H892.5V319.5H893.5V317.5H894.5V315.2H895.5V322.2H896.5V319.3H897.5V328.2H898.5V319.0H899.5V324.0H900.5V318.4H901.5V322.9H902.5V320.8H903.5V317.7H904.5V319.9H905.5V325.4H906.5V328.3H907.5V319.1H908.5V319.0H909.5V326.8H910.5V320.6H911.5V320.6H912.5V319.4H913.5V319.9H914.5V331.2H915.5V327.4H916.5V322.3H917.5V317.5H918.5V320.5H919.5V321.0H920.5V318.1H921.5V319.4H922.5V318.2H923.5V328.5H924.5V315.3H925.5V318.3H926.5V315.9H927.5V315.6H928.5V325.6H929.5V321.0H930.5V320.4H931.5V328.2H932.5V321.6H933.5V318.4H934.5V324.0H935.5V316.8H936.5V316.7H937.5V315.6H938.5V316.4H939.5V317.3H940.5V316.2H941.5V316.3H942.5V329.7H943.5V316.3H944.5V318.8H945.5V318.9H946.5V317.7H947.5V328.7H948.5V328.9H949.5V317.9H950.5V316.5H951.5V317.1H952.5V315.3H953.5V318.1H954.5V325.9H955.5V319.1H956.5V321.0H957.5V326.1H958.5V317.1H959.5V316.7H960.5V325.3H961.5V316.2H962.5V326.3H963.5V318.3H964.5V315.6H965.5V319.8H966.5V314.7H967.5V325.5H968.5V318.0H969.5V316.3H970.5V317.2H971.5V317.3H972.5V318.5H973.5V320.7H974.5V321.4H975.5V328.0H976.5V316.2H977.5V317.9H978.5V323.3H979.5V324.2H980.5V316.6H981.5V317.9H982.5V318.4H983.5V316.5H984.5V316.0H985.5V319.9H986.5V329.8H987.5V317.1H988.5V319.2H989.5V316.7H990.5V318.3H991.5V317.3H992.5V316.2H993.5V327.2H994.5V317.2H995.5V328.9H996.5V322.1H997.5V317.1H998.5V325.4H999.5V321.3H1000.5V323.1H1001.5V319.2H1002.5V328.3H1003.5V326.2H1004.5V322.3H1005.5V317.1H1006.5V316.3H1007.5V318.7H1008.5V317.4H1009.5V325.4H1010.5V318.4H1011.5V316.3H1012.5V319.3H1013.5V317.4H1014.5V316.7H1015.5V316.6H1016.5V328.8H1017.5V318.8H1018.5V318.6H1019.5V316.3H1020.5V321.9H1021.5V316.7H1022.5V327.3H1023.5V317.0H1024.5V319.5H1025.5V313.9H1026.5V318.4H1027.5V318.1H1028.5V317.0H1029.5V322.1H1030.5V324.4H1031.5V319.6H1032.5V318.6H1033.5V328.4H1034.5V320.5H1035.5V322.6H1036.5V319.4H1037.5V322.0H1038.5V322.7H1039.5V319.3H1040.5V319.3H1041.5V318.8H1042.5V317.5H1043.5V320.5H1044.5V319.0H1045.5V315.6H1046.5V317.7H1047.5V319.2H1048.5V321.0H1049.5V317.1H1050.5V327.4H1051.5V323.7H1052.5V315.3H1053.5V323.0H1054.5V320.5H1055.5V331.1H1056.5V324.9H1057.5V319.2H1058.5V320.6H1059.5V322.5H1060.5V321.0H1061.5V323.5H1062.5V321.2H1063.5V319.3H1064.5V323.2H1065.5V323.9H1066.5V325.3H1067.5V329.4H1068.5V327.9H1069.5V326.6H1070.5V326.5H1071.5V328.6H1072.5V328.0H1073.5V332.1H1074.5V329.5H1075.5V330.2H1076.5V329.0H1077.5V339.0H1078.5V331.0H1079.5V338.4H1080.5V332.5H1081.5V331.3H1082.5V332.7H1083.5V331.7H1084.5V340.0H1085.5V333.1H1086.5V334.7H1087.5V337.6H1088.5V335.7H1089.5V340.1H1090.5V337.4H1091.5V339.6H1092.5V336.2H1093.5V336.0H1094.5V335.4H1095.5V336.9H1096.5V336.3H1097.5V341.9H1098.5V337.6H1099.5V337.4H1100.5V337.6H1101.5V343.6H1102.5V341.2H1103.5V339.6H1104.5V340.3H1105.5V339.9H1106.5V340.2H1107.5V343.4H1108.5V342.3H1109.5V343.1H1110.5V341.5H1111.5V341.5H1112.5V342.0H1113.5V342.4H1114.5V341.6H1115.5V342.0H1116.5V343.5H1117.5V345.8H1118.5V342.1H1119.5V344.0H1120.5V342.6H1121.5V343.5H1122.5V346.8H1123.5V344.0H1124.5V344.6H1125.5V346.0H1126.5V346.2H1127.5V347.2H1128.5V344.9H1129.5V345.0H1130.5V344.8H1131.5V346.4H1132.5V346.5H1133.5V346.1H1134.5V347.5H1135.5V346.4H1136.5V346.7H1137.5V348.0H1138.5V348.6H1139.5V347.2H1140.5V347.5H1141.5V348.4H1142.5V347.8H1143.5V347.4H1144.5V348.2H1145.5V348.9H1146.5V348.5H1147.5V349.2H1148.5V348.9H1149.5V349.1H1150.5V349.3H1151.5V349.5H1152.5V349.7H1153.5V349.6H1154.5V349.7H1155.5V349.9H1156.5V350.4H1157.5V350.0H1158.5V350.2H1159.5V350.9H1160.5V350.3H1161.5V350.5H1162.5V350.6H1163.5V351.0H1164.5V351.2H1165.5V350.9H1166.5V351.0H1167.5V352.9H1166.5V353.2H1165.5V353.3H1164.5V352.9H1163.5V353.4H1162.5V353.2H1161.5V353.2H1160.5V353.7H1159.5V353.9H1158.5V353.9H1157.5V354.1H1156.5V353.6H1155.5V354.3H1154.5V354.0H1153.5V353.8H1152.5V354.8H1151.5V355.0H1150.5V355.4H1149.5V355.1H1148.5V355.3H1147.5V355.1H1146.5V355.8H1145.5V356.2H1144.5V355.2H1143.5V356.2H1142.5V356.6H1141.5V356.6H1140.5V356.9H1139.5V356.2H1138.5V355.6H1137.5V355.8H1136.5V358.2H1135.5V358.3H1134.5V356.5H1133.5V358.4H1132.5V358.4H1131.5V359.5H1130.5V359.7H1129.5V358.8H1128.5V359.7H1127.5V357.0H1126.5V359.8H1125.5V360.7H1124.5V360.3H1123.5V358.5H1122.5V360.8H1121.5V358.4H1120.5V361.2H1119.5V360.9H1118.5V360.9H1117.5V361.6H1116.5V359.9H1115.5V361.0H1114.5V362.3H1113.5V363.3H1112.5V363.7H1111.5V363.4H1110.5V363.9H1109.5V364.6H1108.5V364.6H1107.5V365.3H1106.5V362.0H1105.5V362.6H1104.5V367.3H1103.5V368.2H1102.5V370.6H1101.5V373.4H1100.5V373.5H1099.5V377.6H1098.5V377.8H1097.5V374.5H1096.5V375.9H1095.5V373.4H1094.5V376.8H1093.5V377.0H1092.5V378.3H1091.5V377.4H1090.5V368.8H1089.5V378.4H1088.5V372.7H1087.5V369.3H1086.5V379.1H1085.5V380.5H1084.5V379.8H1083.5V378.9H1082.5V380.5H1081.5V382.7H1080.5V382.7H1079.5V382.9H1078.5V383.9H1077.5V382.7H1076.5V383.5H1075.5V383.4H1074.5V384.3H1073.5V377.7H1072.5V384.6H1071.5V383.6H1070.5V374.5H1069.5V380.5H1068.5V386.4H1067.5V387.0H1066.5V383.9H1065.5V381.3H1064.5V383.6H1063.5V387.0H1062.5V384.2H1061.5V384.9H1060.5V374.5H1059.5V379.5H1058.5V379.0H1057.5V387.4H1056.5V386.5H1055.5V388.0H1054.5V386.7H1053.5V390.4H1052.5V387.6H1051.5V385.2H1050.5V381.2H1049.5V385.7H1048.5V386.1H1047.5V385.1H1046.5V386.7H1045.5V384.8H1044.5V387.3H1043.5V386.6H1042.5V386.0H1041.5V384.5H1040.5V392.1H1039.5V388.0H1038.5V388.0H1037.5V387.3H1036.5V386.1H1035.5V381.5H1034.5V376.7H1033.5V384.4H1032.5V385.4H1031.5V383.8H1030.5V384.7H1029.5V384.3H1028.5V386.6H1027.5V383.9H1026.5V375.2H1025.5V386.7H1024.5V379.0H1023.5V390.1H1022.5V385.2H1021.5V385.3H1020.5V385.8H1019.5V386.6H1018.5V374.5H1017.5V385.8H1016.5V378.1H1015.5V384.3H1014.5V383.7H1013.5V383.6H1012.5V385.8H1011.5V375.6H1010.5V386.0H1009.5V388.1H1008.5V387.8H1007.5V384.9H1006.5V387.2H1005.5V388.0H1004.5V385.2H1003.5V379.8H1002.5V377.1H1001.5V383.2H1000.5V377.4H999.5V374.1H998.5V385.5H997.5V387.1H996.5V385.5H995.5V386.2H994.5V380.6H993.5V386.0H992.5V387.8H991.5V385.9H990.5V378.7H989.5V388.0H988.5V384.7H987.5V386.9H986.5V377.8H985.5V385.8H984.5V376.6H983.5V384.7H982.5V387.9H981.5V385.3H980.5V387.0H979.5V387.4H978.5V377.1H977.5V380.3H976.5V384.6H975.5V386.7H974.5V386.6H973.5V378.0H972.5V385.6H971.5V377.0H970.5V373.2H969.5V387.2H968.5V384.8H967.5V391.4H966.5V383.8H965.5V386.1H964.5V388.1H963.5V386.9H962.5V387.4H961.5V382.6H960.5V387.3H959.5V385.3H958.5V386.6H957.5V387.5H956.5V389.6H955.5V392.1H954.5V383.3H953.5V385.7H952.5V379.9H951.5V386.9H950.5V388.6H949.5V388.4H948.5V393.2H947.5V383.6H946.5V386.9H945.5V375.5H944.5V376.0H943.5V390.1H942.5V375.4H941.5V387.4H940.5V387.8H939.5V379.7H938.5V374.2H937.5V376.9H936.5V386.2H935.5V386.6H934.5V388.8H933.5V388.0H932.5V386.7H931.5V389.7H930.5V388.8H929.5V389.4H928.5V387.9H927.5V388.8H926.5V386.0H925.5V389.7H924.5V382.5H923.5V377.3H922.5V381.2H921.5V389.4H920.5V386.8H919.5V388.2H918.5V379.7H917.5V383.8H916.5V387.7H915.5V382.8H914.5V388.3H913.5V382.9H912.5V387.8H911.5V386.2H910.5V385.6H909.5V382.1H908.5V389.6H907.5V388.8H906.5V388.6H905.5V378.3H904.5V376.9H903.5V388.5H902.5V385.9H901.5V388.7H900.5V373.7H899.5V377.0H898.5V387.7H897.5V388.0H896.5V384.6H895.5V384.8H894.5V381.8H893.5V387.6H892.5V386.9H891.5V374.0H890.5V381.7H889.5V377.9H888.5V368.7H887.5V373.1H886.5V380.6H885.5V380.9H884.5V372.6H883.5V382.1H882.5V380.7H881.5V378.3H880.5V382.5H879.5V381.3H878.5V380.5H877.5V383.2H876.5V385.6H875.5V376.3H874.5V381.6H873.5V383.1H872.5V384.7H871.5V376.3H870.5V381.4H869.5V381.1H868.5V380.6H867.5V378.0H866.5V371.4H865.5V381.3H864.5V382.2H863.5V376.2H862.5V372.9H861.5V382.1H860.5V380.7H859.5V378.6H858.5V382.9H857.5V382.0H856.5V374.2H855.5V371.3H854.5V381.5H853.5V380.4H852.5V377.9H851.5V380.6H850.5V380.9H849.5V380.9H848.5V372.3H847.5V370.7H846.5V370.9H845.5V380.6H844.5V380.7H843.5V381.2H842.5V381.7H841.5V381.3H840.5V381.3H839.5V382.3H838.5V375.8H837.5V382.3H836.5V378.7H835.5V371.4H834.5V379.9H833.5V378.8H832.5V374.4H831.5V381.1H830.5V382.3H829.5V382.2H828.5V382.2H827.5V382.2H826.5V374.6H825.5V381.2H824.5V381.2H823.5V376.4H822.5V382.7H821.5V378.7H820.5V382.9H819.5V382.1H818.5V383.3H817.5V375.6H816.5V376.1H815.5V375.6H814.5V382.2H813.5V373.4H812.5V381.0H811.5V376.6H810.5V373.6H809.5V382.0H808.5V381.8H807.5V382.3H806.5V381.4H805.5V382.8H804.5V381.5H803.5V380.9H802.5V382.5H801.5V384.1H800.5V371.2H799.5V371.5H798.5V372.7H797.5V382.1H796.5V383.2H795.5V381.1H794.5V382.2H793.5V379.6H792.5V380.5H791.5V378.9H790.5V381.0H789.5V381.3H788.5V381.1H787.5V381.1H786.5V382.5H785.5V376.3H784.5V373.9H783.5V377.2H782.5V381.0H781.5V380.6H780.5V380.7H779.5V376.6H778.5V380.8H777.5V380.7H776.5V382.0H775.5V375.8H774.5V381.5H773.5V380.2H772.5V381.7H771.5V376.0H770.5V382.0H769.5V377.7H768.5V370.7H767.5V377.0H766.5V382.3H765.5V383.4H764.5V384.3H763.5V381.9H762.5V389.7H761.5V390.1H760.5V387.3H759.5V386.6H758.5V387.0H757.5V387.8H756.5V387.8H755.5V384.4H754.5V378.3H753.5V388.0H752.5V388.1H751.5V382.3H750.5V376.8H749.5V392.3H748.5V389.4H747.5V388.1H746.5V379.3H745.5V383.6H744.5V389.9H743.5V383.9H742.5V386.7H741.5V381.7H740.5V386.7H739.5V388.9H738.5V389.2H737.5V386.2H736.5V386.4H735.5V389.4H734.5V388.1H733.5V389.0H732.5V388.4H731.5V374.6H730.5V383.7H729.5V389.1H728.5V389.7H727.5V379.5H726.5V388.8H725.5V375.1H724.5V388.9H723.5V375.3H722.5V389.3H721.5V390.5H720.5V384.8H719.5V388.0H718.5V388.8H717.5V388.0H716.5V375.6H715.5V390.6H714.5V377.4H713.5V380.1H712.5V375.3H711.5V390.2H710.5V387.2H709.5V386.6H708.5V389.0H707.5V384.4H706.5V387.3H705.5V389.0H704.5V386.1H703.5V377.1H702.5V388.0H701.5V374.8H700.5V390.3H699.5V391.3H698.5V385.3H697.5V388.3H696.5V380.9H695.5V388.8H694.5V383.1H693.5V387.7H692.5V380.0H691.5V388.1H690.5V388.7H689.5V387.9H688.5V378.1H687.5V386.6H686.5V387.1H685.5V387.4H684.5V386.5H683.5V388.1H682.5V385.9H681.5V374.1H680.5V387.9H679.5V384.7H678.5V386.0H677.5V387.9H676.5V389.2H675.5V388.7H674.5V387.1H673.5V387.6H672.5V386.6H671.5V390.1H670.5V387.4H669.5V378.9H668.5V385.3H667.5V375.3H666.5V388.4H665.5V377.6H664.5V387.1H663.5V386.1H662.5V389.7H661.5V389.1H660.5V389.6H659.5V385.5H658.5V385.9H657.5V389.2H656.5V387.0H655.5V389.7H654.5V386.9H653.5V389.4H652.5V386.9H651.5V388.9H650.5V381.3H649.5V388.4H648.5V387.6H647.5V386.6H646.5V387.7H645.5V376.1H644.5V388.4H643.5V389.2H642.5V389.5H641.5V388.2H640.5V382.6H639.5V377.0H638.5V385.1H637.5V387.7H636.5V387.7H635.5V389.1H634.5V385.1H633.5V374.8H632.5V387.0H631.5V385.9H630.5V386.2H629.5V374.8H628.5V389.5H627.5V384.1H626.5V387.1H625.5V388.2H624.5V385.0H623.5V382.9H622.5V383.6H621.5V387.3H620.5V387.1H619.5V387.2H618.5V390.3H617.5V376.7H616.5V381.8H615.5V383.4H614.5V377.9H613.5V386.6H612.5V388.4H611.5V384.6H610.5V389.9H609.5V387.3H608.5V389.1H607.5V374.9H606.5V387.3H605.5V389.1H604.5V389.7H603.5V392.6H602.5V388.6H601.5V388.6H600.5V382.1H599.5V381.1H598.5V387.1H597.5V387.8H596.5V377.4H595.5V388.7H594.5V388.5H593.5V384.6H592.5V381.7H591.5V389.1H590.5V388.9H589.5V388.9H588.5V383.2H587.5V389.5H586.5V374.6H585.5V387.9H584.5V389.8H583.5V388.6H582.5V388.1H581.5V386.8H580.5V386.6H579.5V388.2H578.5V377.6H577.5V388.3H576.5V389.0H575.5V389.2H574.5V377.2H573.5V389.2H572.5V380.1H571.5V386.2H570.5V389.0H569.5V391.1H568.5V375.4H567.5V384.3H566.5V388.3H565.5V385.6H564.5V377.6H563.5V389.5H562.5V388.6H561.5V376.8H560.5V375.1H559.5V381.4H558.5V379.4H557.5V379.1H556.5V386.9H555.5V381.3H554.5V381.0H553.5V387.0H552.5V391.4H551.5V390.5H550.5V383.1H549.5V390.4H548.5V387.5H547.5V377.0H546.5V390.1H545.5V375.3H544.5V376.0H543.5V388.1H542.5V382.2H541.5V381.9H540.5V384.9H539.5V385.6H538.5V393.4H537.5V378.3H536.5V390.1H535.5V383.0H534.5V378.1H533.5V393.1H532.5V388.6H531.5V375.1H530.5V376.3H529.5V393.7H528.5V387.5H527.5V388.1H526.5V390.3H525.5V388.5H524.5V386.5H523.5V389.3H522.5V388.2H521.5V381.3H520.5V388.7H519.5V376.0H518.5V387.8H517.5V374.4H516.5V380.2H515.5V391.3H514.5V378.6H513.5V387.0H512.5V387.1H511.5V392.1H510.5V378.7H509.5V387.8H508.5V386.9H507.5V388.8H506.5V388.5H505.5V386.5H504.5V379.0H503.5V387.9H502.5V389.0H501.5V391.7H500.5V384.6H499.5V388.3H498.5V376.0H497.5V388.9H496.5V380.9H495.5V389.2H494.5V390.0H493.5V388.8H492.5V385.6H491.5V390.1H490.5V388.9H489.5V388.2H488.5V379.2H487.5V390.3H486.5V389.1H485.5V374.8H484.5V387.1H483.5V387.8H482.5V392.2H481.5V390.0H480.5V389.4H479.5V386.0H478.5V389.4H477.5V386.8H476.5V385.7H475.5V391.3H474.5V388.7H473.5V377.9H472.5V389.3H471.5V389.1H470.5V387.2H469.5V387.4H468.5V388.1H467.5V387.2H466.5V386.1H465.5V379.4H464.5V389.1H463.5V389.2H462.5V387.6H461.5V376.2H460.5V385.4H459.5V386.3H458.5V387.5H457.5V387.0H456.5V386.8H455.5V386.9H454.5V386.4H453.5V388.6H452.5V387.9H451.5V388.0H450.5V387.5H449.5V388.7H448.5V386.2H447.5V384.4H446.5V386.1H445.5V389.0H444.5V385.4H443.5V380.7H442.5V389.1H441.5V387.8H440.5V389.1H439.5V376.0H438.5V387.2H437.5V388.8H436.5V380.4H435.5V386.1H434.5V387.6H433.5V374.0H432.5V381.8H431.5V391.1H430.5V388.2H429.5V386.4H428.5V385.4H427.5V374.6H426.5V386.5H425.5V392.6H424.5V388.0H423.5V386.7H422.5V388.5H421.5V379.7H420.5V375.5H419.5V387.0H418.5V388.1H417.5V379.9H416.5V383.1H415.5V385.7H414.5V378.0H413.5V387.0H412.5V389.1H411.5V388.5H410.5V388.4H409.5V384.1H408.5V389.2H407.5V383.5H406.5V389.1H405.5V389.0H404.5V388.7H403.5V383.2H402.5V388.0H401.5V382.1H400.5V374.9H399.5V377.8H398.5V383.0H397.5V390.3H396.5V390.3H395.5V387.2H394.5V382.7H393.5V387.0H392.5V389.1H391.5V389.3H390.5V389.3H389.5V387.3H388.5V387.0H387.5V389.7H386.5V387.3H385.5V383.9H384.5V389.4H383.5V378.8H382.5V389.5H381.5V374.8H380.5V386.6H379.5V388.2H378.5V387.0H377.5V382.7H376.5V389.0H375.5V385.4H374.5V382.2H373.5V388.5H372.5V388.9H371.5V390.9H370.5V385.8H369.5V390.8H368.5V377.9H367.5V385.0H366.5V386.2H365.5V378.6H364.5V387.7H363.5V390.0H362.5V376.4H361.5V387.6H360.5V390.5H359.5V382.9H358.5V388.6H357.5V381.1H356.5V389.5H355.5V388.8H354.5V388.3H353.5V386.5H352.5V380.8H351.5V388.5H350.5V391.6H349.5V375.6H348.5V384.6H347.5V375.1H346.5V388.5H345.5V388.1H344.5V390.8H343.5V387.2H342.5V382.4H341.5V383.7H340.5V387.4H339.5V375.9H338.5V388.5H337.5V375.4H336.5V387.0H335.5V386.3H334.5V383.6H333.5V387.6H332.5V387.6H331.5V388.2H330.5V386.2H329.5V385.3H328.5V387.7H327.5V385.1H326.5V385.9H325.5V376.5H324.5V380.0H323.5V384.7H322.5V385.0H321.5V388.5H320.5V387.6H319.5V386.3H318.5V391.2H317.5V387.6H316.5V385.7H315.5V387.8H314.5V375.2H313.5V389.3H312.5V377.1H311.5V389.7H310.5V388.7H309.5V376.9H308.5V389.0H307.5V377.1H306.5V384.2H305.5V386.4H304.5V386.4H303.5V383.6H302.5V389.3H301.5V383.9H300.5V384.9H299.5V386.6H298.5V376.2H297.5V387.5H296.5V384.8H295.5V377.9H294.5V378.0H293.5V384.6H292.5V382.1H291.5V381.8H290.5V382.4H289.5V377.8H288.5V377.0H287.5V369.5H286.5V372.2H285.5V370.1H284.5V364.0H283.5V364.5H282.5V365.3H281.5V374.6H280.5V376.0H279.5V383.1H278.5V382.0H277.5V369.2H276.5V376.7H275.5V374.7H274.5V371.3H273.5V367.8H272.5V362.0H271.5V362.7H270.5V369.0H269.5V374.1H268.5V374.8H267.5V373.1H266.5V379.5H265.5V379.5H264.5V354.5H263.5V354.4H262.5V353.6H261.5V353.7H260.5V354.1H259.5V354.3H258.5V354.1H257.5V354.5H256.5V354.5H255.5V354.1H254.5V354.7H253.5V354.4H252.5V354.4H251.5V354.4H250.5V354.3H249.5V354.3H248.5V354.3H247.5V354.4H246.5V354.3H245.5V354.3H244.5V354.5H243.5V354.3H242.5Z" fill="#faad42"/>
</svg>
<div class="ctitle" style="left:241px;width:927px;top:137.2px">I'll Be There For You</div>
<div class="ctitle" style="left:241px;width:927px;top:199.8px">Electric Guitar</div>
<div class="ctitle" style="left:241px;width:927px;top:301.4px">Non Electric Guitar</div>

<!-- playhead -->
<div class="a" style="left:556px;top:108px;width:1.3px;height:523px;background:#c4cacf"></div>
<svg class="a" style="left:551px;top:102px" width="12" height="8"><path d="M0.5,1 L10.5,1 L5.5,6.5Z" fill="#c8c8c8"/></svg>

<!-- bottom bar -->
<div class="a" style="left:43.2px;top:631px;width:1127.8px;height:1.5px;background:#3e4b52"></div>

<!-- ===== track 1 header contents ===== -->
<svg class="a" style="left:66px;top:144px" width="26" height="30" viewBox="0 0 26 30">
 <ellipse cx="9.3" cy="22.8" rx="5.4" ry="5.2" fill="#fff"/>
 <path d="M12.7,22.8 L12.7,3 Q13.2,2.2 14.4,2.6 L14.4,22.8Z" fill="#fff"/>
 <path d="M13.8,3.6 C14.8,7 19.4,8.4 21,11.8 C21.9,13.8 21.3,15.6 20.3,17" stroke="#fff" stroke-width="2.9" fill="none" stroke-linecap="round"/>
</svg>
<div class="tname" style="left:113.4px;top:153.2px">I'll Be There For You</div>
<div class="meter" style="left:228px;top:139.5px;height:40px"></div>
<div class="meter" style="left:233.6px;top:139.5px;height:40px"></div>

<!-- ===== track 2 header contents ===== -->
<div class="a" style="left:48.6px;top:243.6px;font-size:7px;font-weight:bold;color:#4a2630">1</div>
<svg class="a" style="left:62px;top:196px" width="36" height="36" viewBox="0 0 36 36">
 <path d="M25.2,9.2 L24.6,6.6 L25.8,3.4 L27.4,5.4 L28.8,3.2 L30.9,5.1 L29.3,6.6 L31,7.6 L28.2,9.9Z" fill="#fff"/>
 <path d="M27,7.6 L15.2,18.8" stroke="#fff" stroke-width="2.3"/>
 <path d="M14.2,14.6 L12.6,18.4 L8.6,19.6 L4.9,20.6 L5.1,25.8 L9.6,25.4 L8.9,31 L13.6,27.2 L15.2,24.2 L18.9,21.8 L16.4,20.8 L17.6,18Z" fill="#fff"/>
 <path d="M11.3,21.6 L13.8,19.6 M11.6,23.2 L14.3,21.1 M12.1,24.8 L14.6,22.6" stroke="#8aa0c4" stroke-width="0.7"/>
</svg>
<div class="tname" style="left:136.2px;top:206.8px">Electric Guitar</div>
<!-- fader -->

<div class="a" style="left:89px;top:262px;width:3.6px;height:26px;background:#1e8ccc"></div>
<div class="a" style="left:84px;top:236.5px;width:13px;height:29px;border-radius:2px;background:linear-gradient(#6a6a6a 0%,#4a4a4a 12%,#161616 16%,#121212 40%,#8a8a8a 47%,#b8b8b8 50%,#5a5a5a 55%,#6e6e6e 70%,#858585 86%,#5a5a5a 92%,#2a2a2a 100%);border:1px solid #1a1a1a"></div>
<div class="a" style="left:80px;top:250.3px;width:4px;height:1.5px;background:#8d96a6"></div>
<div class="a" style="left:97px;top:250.3px;width:5px;height:1.5px;background:#8d96a6"></div>
<svg class="a" style="left:102px;top:231px" width="16" height="13" viewBox="0 0 16 13">
 <path d="M1,4.5 L3.5,4.5 L7,1.2 L7,11.8 L3.5,8.5 L1,8.5Z" fill="#fff"/>
 <path d="M9,4 Q10.3,6.5 9,9 M11,2.6 Q13.2,6.5 11,10.4 M13,1.2 Q16,6.5 13,11.8" stroke="#fff" stroke-width="1.1" fill="none"/>
</svg>
<svg class="a" style="left:104px;top:282px" width="12" height="11" viewBox="0 0 12 11">
 <path d="M1,3.8 L3.5,3.8 L6.5,1 L6.5,10 L3.5,7.2 L1,7.2Z" fill="#fff"/>
 <path d="M8.2,3.6 Q9.8,5.5 8.2,7.4" stroke="#fff" stroke-width="1.2" fill="none"/>
</svg>
<div class="mbtn" style="left:151px;top:234.5px;width:18.5px;height:18.5px;font-size:13.5px;line-height:18.5px">M</div>
<div class="mbtn" style="left:175px;top:233.5px;width:21px;height:21px;font-size:13.5px;line-height:17.5px;border:2px solid #f4cf3c;border-radius:3.5px">S</div>
<div class="a" style="left:136px;top:269.5px;font-size:10.5px;color:#fff">L</div>
<div class="a" style="left:203.3px;top:269.5px;font-size:10.5px;color:#fff">R</div>
<svg class="a" style="left:149px;top:260px" width="48" height="20" viewBox="0 0 48 20">
 <defs><radialGradient id="kg" cx="40%" cy="35%" r="70%"><stop offset="0" stop-color="#fff"/><stop offset="0.6" stop-color="#e6e6e6"/><stop offset="1" stop-color="#a9a9a9"/></radialGradient></defs>
 <circle cx="10.4" cy="10.1" r="8.4" fill="url(#kg)" stroke="#6a7080" stroke-width="0.5"/>
 <path d="M10.6,11.2 L6.6,16.6" stroke="#737373" stroke-width="2.3"/>
 <circle cx="37.2" cy="10.1" r="8.4" fill="url(#kg)" stroke="#6a7080" stroke-width="0.5"/>
 <path d="M37,11.2 L41,16.6" stroke="#737373" stroke-width="2.3"/>
</svg>
<div class="a" style="left:148px;top:279.5px;width:23px;height:10px;background:#fff;color:#000;font-size:10px;line-height:10px;text-align:center;letter-spacing:-0.3px">-100</div>
<div class="a" style="left:175px;top:279.5px;width:22px;height:10px;background:#fff;color:#000;font-size:10px;line-height:10px;text-align:center;letter-spacing:-0.3px">100</div>
<div class="meter" style="left:224.8px;top:234.8px;height:57.6px;background:linear-gradient(#000 0%,#000 22%,#8a7a00 22%,#8a7a00 27%,#f4f200 28%,#c8e800 42%,#62b812 72%,#138808 100%)"></div>
<div class="meter" style="left:230.7px;top:234.8px;height:57.6px;background:linear-gradient(#000 0%,#000 22%,#8a7a00 22%,#8a7a00 25%,#000 25%,#000 27%,#f4f200 28%,#c8e800 42%,#62b812 72%,#138808 100%)"></div>

<!-- ===== track 3 header contents ===== -->
<div class="a" style="left:48.6px;top:345.2px;font-size:7px;font-weight:bold;color:#4a3418">2</div>
<svg class="a" style="left:67px;top:302px" width="26" height="30" viewBox="0 0 26 30">
 <ellipse cx="9.2" cy="19.6" rx="5.3" ry="5.1" fill="#fff"/>
 <path d="M12.5,19.6 L12.5,2.4 Q13,1.6 14.2,2 L14.2,19.6Z" fill="#fff"/>
 <path d="M13.6,3 C14.6,6.4 18.8,7.6 20.3,10.8 C21.1,12.6 20.6,14.4 19.6,15.6" stroke="#fff" stroke-width="2.8" fill="none" stroke-linecap="round"/>
</svg>
<div class="tname" style="left:123.8px;top:308.5px">Non Electric Guitar</div>
<div class="a" style="left:71px;top:350.5px;width:21px;height:3px;background:#1e88c8"></div>
<div class="a" style="left:102.3px;top:341.8px;width:1.4px;height:4px;background:#a0a6ae"></div><div class="a" style="left:102.3px;top:358.1px;width:1.4px;height:4px;background:#a0a6ae"></div>
<div class="a" style="left:91px;top:347.3px;width:22px;height:10px;border-radius:2px;background:linear-gradient(90deg,#555 0%,#8a8a8a 8%,#ababab 20%,#8e8e8e 42%,#c4c4c4 47%,#a8a8a8 53%,#202020 57%,#151515 80%,#a8a8a8 84%,#8a8a8a 95%,#333 100%);border:1px solid #111"></div>
<div class="mbtn" style="left:150.2px;top:342px;width:20px;height:20px;font-size:15px;line-height:20px">M</div>
<div class="mbtn" style="left:175.5px;top:342px;width:20px;height:20px;font-size:15px;line-height:20px">S</div>
<div class="meter" style="left:225px;top:336.4px;height:32.3px"></div>
<div class="meter" style="left:230.7px;top:336.4px;height:32.3px"></div>
<div class="a" style="left:56.5px;top:372.2px;width:184px;height:1px;background:#646462"></div>
<div class="a" style="left:57px;top:373.5px;width:99.5px;height:23.5px;background:#1f7a3a"></div>
<div class="a" style="left:60.3px;top:380.5px;font-size:7.7px;color:#f2f2f2;white-space:nowrap;letter-spacing:-0.32px;text-shadow:0.3px 0 0 #f2f2f2">Separation: processing</div>
<svg class="a" style="left:181px;top:375px" width="21" height="21" viewBox="0 0 21 21">
 <g fill="#dde">
  <circle cx="10.4" cy="2.6" r="0.9" opacity="0.9"/>
  <circle cx="14.6" cy="4" r="1.1"/>
  <circle cx="17.3" cy="10.5" r="1.3"/>
  <circle cx="16" cy="14.8" r="1.5"/>
  <circle cx="10.5" cy="17.2" r="1.6"/>
  <circle cx="6.2" cy="15" r="0.6" opacity="0.6"/>
  <circle cx="3.8" cy="10.5" r="0.7" opacity="0.8"/>
  <circle cx="5.8" cy="5.5" r="0.8" opacity="0.8"/>
 </g>
</svg>

<!-- ===== bottom bar ===== -->
<svg class="a" style="left:55px;top:635px" width="56" height="56" viewBox="0 0 56 56">
 <defs>
  <radialGradient id="ko" cx="50%" cy="45%" r="55%"><stop offset="0" stop-color="#2a2a2a"/><stop offset="0.85" stop-color="#1c1c1c"/><stop offset="1" stop-color="#0a0a0a"/></radialGradient>
  <radialGradient id="ki" cx="50%" cy="30%" r="70%"><stop offset="0" stop-color="#2e2e2e"/><stop offset="1" stop-color="#0d0d0d"/></radialGradient>
 </defs>
 <circle cx="27.8" cy="28" r="22.8" fill="url(#ko)" stroke="#0a0a0a" stroke-width="0.8"/>
 <circle cx="27.8" cy="29" r="13.5" fill="#0a0a0a" opacity="0.6"/>
 <circle cx="27.8" cy="27.6" r="13" fill="url(#ki)"/>
 <circle cx="32.7" cy="21.2" r="1.5" fill="#fff"/>
 <g fill="#a8dcf0"><circle cx="16.4" cy="44.2" r="1.15"/><circle cx="11.8" cy="38.8" r="1.15"/><circle cx="8.7" cy="32.4" r="1.15"/><circle cx="8.7" cy="25.6" r="1.15"/><circle cx="10.9" cy="19" r="1.15"/><circle cx="15.1" cy="13.9" r="1.15"/><circle cx="21.1" cy="9.6" r="1.15"/><circle cx="28.2" cy="9" r="1.15"/><circle cx="34.6" cy="9.6" r="1.15"/><circle cx="40.8" cy="13.9" r="1.15"/></g>
</svg>
<div class="a" style="left:55.5px;top:689.5px;width:54.5px;height:16.5px;background:#363636;border:1px solid #111;color:#d0d0d0;font-size:10.5px;line-height:14.5px;text-align:center">0.0 dB</div>

<div class="a" style="left:282.5px;top:641.3px;width:108.5px;height:20px;background:#353535;border:1.5px solid #050505;color:#d4d4d4;font-size:10.3px;line-height:21px;text-align:center;white-space:nowrap">01:07:268 / 03:17:326</div>

<div class="tbtn" style="left:135px"><svg width="30" height="30" viewBox="0 0 30 30"><rect x="7" y="6.3" width="2" height="17" fill="#e2e2e2"/><path d="M23.5,6.8 L23.5,22.6 L10.8,14.7Z" fill="#e2e2e2"/></svg></div>
<div class="tbtn" style="left:173px"><svg width="30" height="30" viewBox="0 0 30 30"><path d="M13.3,8 L13.3,21.6 L3.4,14.8Z M25,8 L25,21.6 L15.1,14.8Z" fill="#e2e2e2"/></svg></div>
<div class="tbtn" style="left:210.5px"><svg width="30" height="30" viewBox="0 0 30 30"><path d="M4,8 L4,21.6 L13.4,14.8Z M15.8,8 L15.8,21.6 L25.7,14.8Z" fill="#e2e2e2"/></svg></div>
<div class="tbtn" style="left:248px"><svg width="30" height="30" viewBox="0 0 30 30"><path d="M6.9,6.3 L6.9,22.8 L19.7,14.6Z" fill="#e2e2e2"/><rect x="21" y="6.3" width="2" height="16.8" fill="#e2e2e2"/></svg></div>
<div class="a" style="left:285.5px;top:673px;width:30px;height:29.5px;border-radius:1px;background:linear-gradient(#1f5470,#19405e)"><svg width="30" height="30" viewBox="0 0 30 30" style="position:absolute;left:0;top:0"><path d="M8,10.2 L3.8,10.2 L3.8,18 L17,18 M12,18 L26.6,18 L26.6,10.2 L20,10.2" stroke="#8c857c" stroke-width="1.3" fill="none"/><path d="M19.5,8.2 L22.5,10.2 L19.5,12.2Z" fill="#8c857c"/><path d="M9,10.2 L19,10.2" stroke="#8c857c" stroke-width="1.3"/><path d="M0.6,4.2 L29,23.9" stroke="#8c857c" stroke-width="1"/></svg></div>
<div class="tbtn" style="left:323px"><svg width="30" height="30" viewBox="0 0 30 30"><rect x="7.6" y="7.2" width="14.5" height="14.8" fill="#e2e2e2"/></svg></div>
<div class="tbtn" style="left:360.6px"><svg width="30" height="30" viewBox="0 0 30 30"><rect x="9.6" y="7.6" width="3.9" height="14.4" fill="#e4e4e4"/><rect x="15.4" y="7.6" width="3.9" height="14.4" fill="#e4e4e4"/></svg></div>

<!-- zoom controls -->
<div class="zbtn" style="left:774.4px"><svg width="34" height="33" viewBox="0 0 34 33"><circle cx="14" cy="14" r="6.8" stroke="#fff" stroke-width="1.2" fill="none"/><path d="M10.6,14 H17.4 M14,10.6 V17.4" stroke="#fff" stroke-width="1.4"/><path d="M18.9,18.9 L26.8,26" stroke="#fff" stroke-width="1.2"/></svg></div>
<div class="zbtn" style="left:823.8px"><svg width="34" height="33" viewBox="0 0 34 33"><circle cx="14" cy="14" r="6.8" stroke="#fff" stroke-width="1.2" fill="none"/><path d="M10.6,14 H17.4" stroke="#fff" stroke-width="1.4"/><path d="M18.9,18.9 L26.8,26" stroke="#fff" stroke-width="1.2"/></svg></div>
<div class="zbtn" style="left:880px"><svg width="34" height="33" viewBox="0 0 34 33"><circle cx="14" cy="14" r="6.8" stroke="#fff" stroke-width="1.2" fill="none"/><path d="M10.6,14 H17.4 M14,10.6 V17.4" stroke="#fff" stroke-width="1.4"/><path d="M18.9,18.9 L26.8,26" stroke="#fff" stroke-width="1.2"/></svg></div>
<div class="zbtn" style="left:920.2px"><svg width="34" height="33" viewBox="0 0 34 33"><circle cx="14" cy="14" r="6.8" stroke="#fff" stroke-width="1.2" fill="none"/><path d="M10.6,14 H17.4" stroke="#fff" stroke-width="1.4"/><path d="M18.9,18.9 L26.8,26" stroke="#fff" stroke-width="1.2"/></svg></div>
<div class="zbtn" style="left:966px"><svg width="34" height="33" viewBox="0 0 34 33"><circle cx="16.8" cy="16.8" r="7.3" stroke="#fff" stroke-width="1.3" fill="none"/><path d="M16.8,5.6 L14.5,9.8 L19.1,9.8Z M16.8,28 L14.5,23.8 L19.1,23.8Z M5.6,16.8 L9.8,14.5 L9.8,19.1Z M28,16.8 L23.8,14.5 L23.8,19.1Z" fill="#fff"/></svg></div>
<svg class="a" style="left:808px;top:670px" width="11" height="29" viewBox="0 0 11 29"><path d="M5.5,4 V25" stroke="#fff" stroke-width="2"/><path d="M1.6,8.6 L5.5,3.6 L9.4,8.6 M1.6,20.4 L5.5,25.4 L9.4,20.4" stroke="#fff" stroke-width="2.2" fill="none"/></svg>
<svg class="a" style="left:858px;top:670px" width="11" height="29" viewBox="0 0 11 29"><path d="M5.5,4 V25" stroke="#fff" stroke-width="2"/><path d="M1.6,8.6 L5.5,3.6 L9.4,8.6 M1.6,20.4 L5.5,25.4 L9.4,20.4" stroke="#fff" stroke-width="2.2" fill="none"/></svg>
<svg class="a" style="left:882px;top:657px" width="30" height="11" viewBox="0 0 30 11"><path d="M3,5.5 H27" stroke="#fff" stroke-width="2"/><path d="M7,1.6 L2.4,5.5 L7,9.4 M23,1.6 L27.6,5.5 L23,9.4" stroke="#fff" stroke-width="2.2" fill="none"/></svg>
<svg class="a" style="left:922px;top:657px" width="30" height="11" viewBox="0 0 30 11"><path d="M3,5.5 H27" stroke="#fff" stroke-width="2"/><path d="M7,1.6 L2.4,5.5 L7,9.4 M23,1.6 L27.6,5.5 L23,9.4" stroke="#fff" stroke-width="2.2" fill="none"/></svg>
<div class="a" style="left:873.8px;top:660.5px;width:1.5px;height:44.5px;background:#08151e"></div>
<div class="a" style="left:959.7px;top:660.5px;width:1.5px;height:44.5px;background:#08151e"></div>

<!-- merge/bounce -->
<div class="a" style="left:1057px;top:650px;font-size:9.3px;color:#f0f0f0;white-space:nowrap;letter-spacing:-0.15px;text-shadow:0.35px 0 0 #f0f0f0">Merge selected</div>
<div class="a" style="left:1059.5px;top:684.5px;font-size:9.3px;color:#f0f0f0;white-space:nowrap;letter-spacing:-0.15px;text-shadow:0.35px 0 0 #f0f0f0">Bounce</div>
<div class="a" style="left:1133.8px;top:639.6px;width:30.5px;height:30px;border-radius:2px;background:#1a3b5f">
 <div class="a" style="left:7.6px;top:9.4px;width:15px;height:2px;background:#6e7c8a"></div>
 <div class="a" style="left:7.6px;top:14px;width:15px;height:2px;background:#6e7c8a"></div>
 <div class="a" style="left:7.6px;top:18.6px;width:15px;height:2px;background:#6e7c8a"></div>
</div>
<div class="a" style="left:1098.8px;top:673.6px;width:31.6px;height:31px;border-radius:3px;background:#3a3d48;border:1px solid #1b1f27">
 <div class="a" style="left:7.2px;top:13.5px;width:15.2px;height:2px;background:#fff"></div>
</div>
<div class="a" style="left:1133.5px;top:673.6px;width:31px;height:31px;border-radius:3px;background:#3a3d48;border:1px solid #1b1f27">
 <div class="a" style="left:7px;top:9px;width:15.2px;height:2px;background:#fff"></div>
 <div class="a" style="left:7px;top:13.6px;width:15.2px;height:2px;background:#fff"></div>
 <div class="a" style="left:7px;top:18.6px;width:15.2px;height:2px;background:#fff"></div>
</div>

</body></html>
